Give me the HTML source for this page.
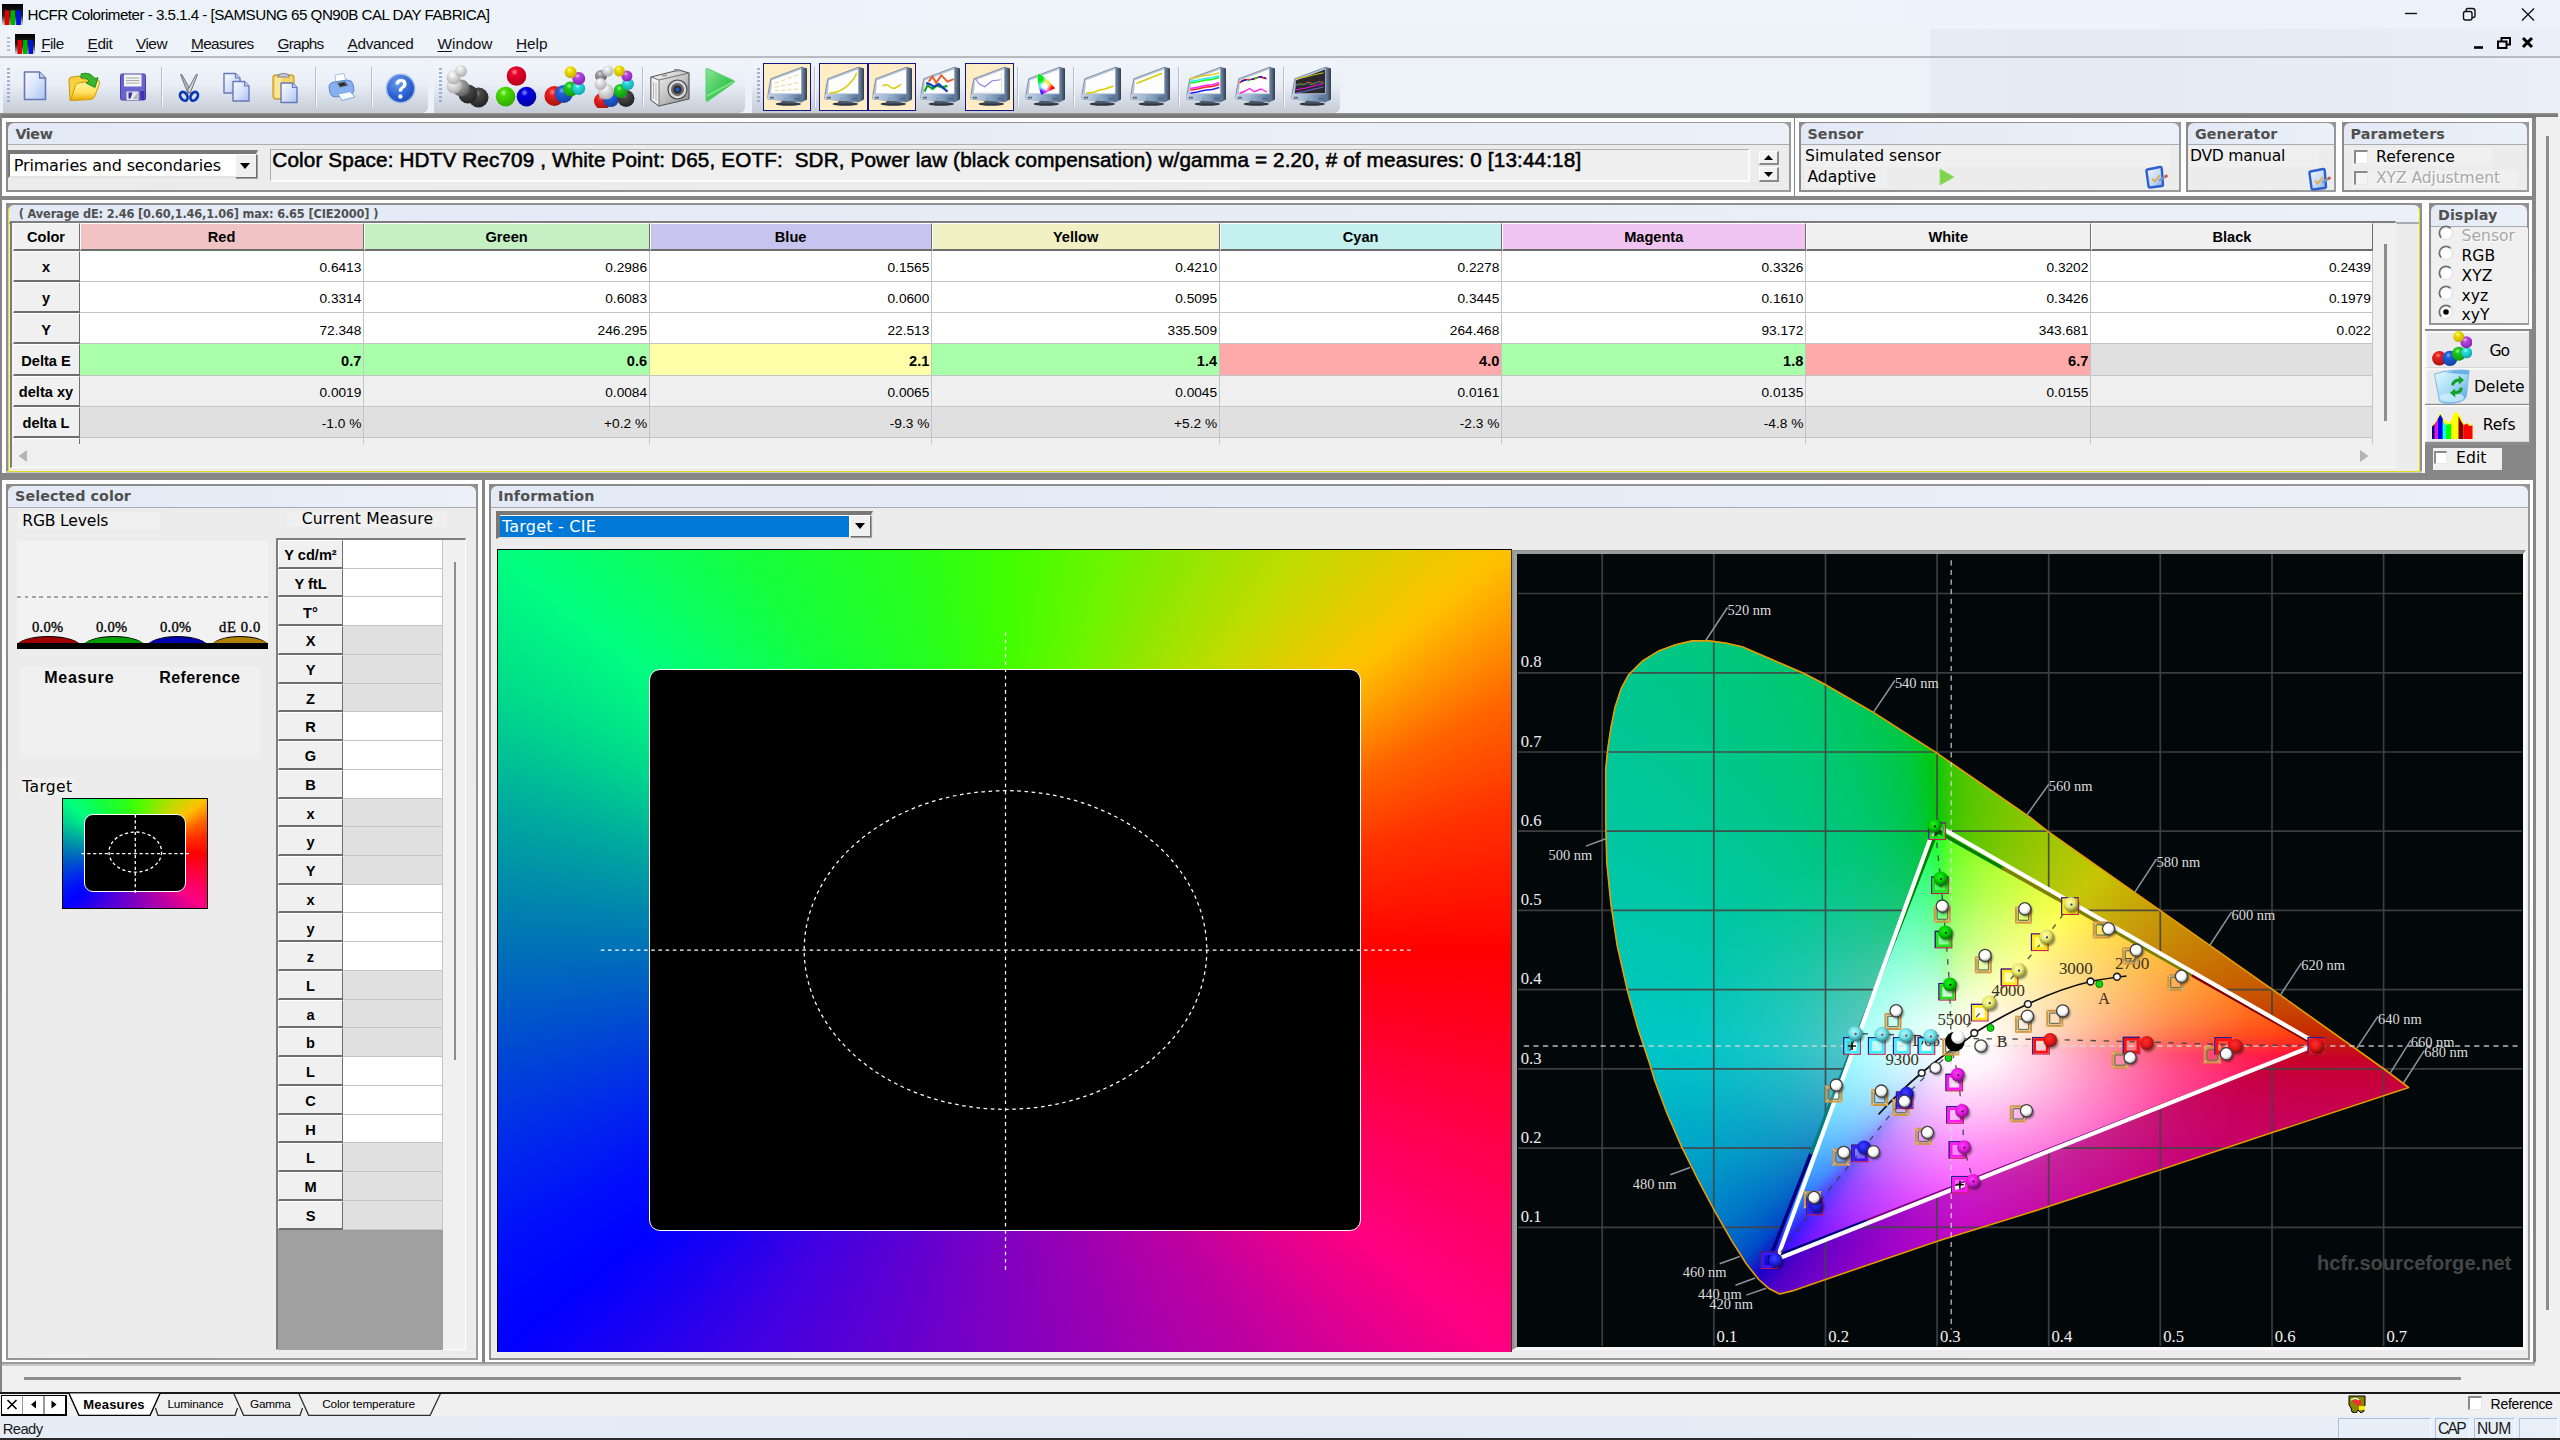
<!DOCTYPE html>
<html lang="en"><head><meta charset="utf-8"><title>HCFR Colorimeter - 3.5.1.4 - [SAMSUNG 65 QN90B CAL DAY FABRICA]</title>
<style>html,body{margin:0;padding:0;width:2560px;height:1440px;overflow:hidden;background:#f0f0f0}div{position:absolute;box-sizing:border-box}.t{white-space:pre}u{text-decoration-thickness:1.3px;text-underline-offset:2px}</style></head><body>
<div id="app" style="left:0;top:0;width:2560px;height:1440px;overflow:hidden">
<div style="left:0px;top:0px;width:2560px;height:29px;background:linear-gradient(90deg,#ebf2f9,#eef4fa 40%,#eef4fa 70%,#ecf2f9);"></div>
<svg style="position:absolute;left:2px;top:4px" width="21" height="21" viewBox="0 0 20 20"><defs><linearGradient id="ig" x1="0" y1="0" x2="0" y2="1"><stop offset="0" stop-color="#000"/><stop offset=".55" stop-color="#222"/><stop offset="1" stop-color="#ddd"/></linearGradient></defs><rect x="0" y="0" width="20" height="20" fill="url(#ig)"/><rect x="2.5" y="6" width="4.5" height="14" fill="#e00000"/><rect x="8" y="6" width="4.5" height="14" fill="#00b000"/><rect x="13.5" y="6" width="4.5" height="14" fill="#0010e0"/></svg>
<div class="t" style="left:27.50px;top:5.03px;font-family:'Liberation Sans',sans-serif;font-size:15.2px;line-height:20px;font-weight:400;color:#000;letter-spacing:-0.526px;">HCFR Colorimeter - 3.5.1.4 - [SAMSUNG 65 QN90B CAL DAY FABRICA]</div>
<svg style="position:absolute;left:2380px;top:0" width="180" height="29" viewBox="2380 0 180 29" fill="none" stroke="#111" stroke-width="1.4"><path d="M2405 13.5h12"/><rect x="2463.500" y="11.500" width="8.500" height="8.500" rx="2"/><path d="M2466 11.500v-1q0-2 2-2h4.500q2.500 0 2.500 2.500v4.500q0 2-2 2h-1"/><path d="M2522 8.5l12 12M2534 8.5l-12 12"/></svg>
<div style="left:0px;top:29px;width:2560px;height:29px;background:#eef3fa;"></div>
<div style="left:1930px;top:29px;width:630px;height:84px;background:linear-gradient(90deg,#e6ecf6,#e5ebf5 30%,#e9eef7);"></div>
<div style="left:7px;top:37px;width:3px;height:14px;background:repeating-linear-gradient(180deg,#9aa7bb 0 2px,transparent 2px 4px);opacity:.7"></div>
<svg style="position:absolute;left:15px;top:34px" width="20" height="20" viewBox="0 0 20 20"><defs><linearGradient id="ig" x1="0" y1="0" x2="0" y2="1"><stop offset="0" stop-color="#000"/><stop offset=".55" stop-color="#222"/><stop offset="1" stop-color="#ddd"/></linearGradient></defs><rect x="0" y="0" width="20" height="20" fill="url(#ig)"/><rect x="2.5" y="6" width="4.5" height="14" fill="#e00000"/><rect x="8" y="6" width="4.5" height="14" fill="#00b000"/><rect x="13.5" y="6" width="4.5" height="14" fill="#0010e0"/></svg>
<div class="t" style="left:41.20px;top:34.46px;font-family:'Liberation Sans',sans-serif;font-size:15.4px;line-height:20px;font-weight:400;color:#111;letter-spacing:-0.578px;"><u>F</u>ile</div>
<div class="t" style="left:87.50px;top:34.46px;font-family:'Liberation Sans',sans-serif;font-size:15.4px;line-height:20px;font-weight:400;color:#111;letter-spacing:-0.383px;"><u>E</u>dit</div>
<div class="t" style="left:136.00px;top:34.46px;font-family:'Liberation Sans',sans-serif;font-size:15.4px;line-height:20px;font-weight:400;color:#111;letter-spacing:-0.523px;"><u>V</u>iew</div>
<div class="t" style="left:191.00px;top:34.46px;font-family:'Liberation Sans',sans-serif;font-size:15.4px;line-height:20px;font-weight:400;color:#111;letter-spacing:-0.635px;"><u>M</u>easures</div>
<div class="t" style="left:277.50px;top:34.46px;font-family:'Liberation Sans',sans-serif;font-size:15.4px;line-height:20px;font-weight:400;color:#111;letter-spacing:-0.747px;"><u>G</u>raphs</div>
<div class="t" style="left:347.50px;top:34.46px;font-family:'Liberation Sans',sans-serif;font-size:15.4px;line-height:20px;font-weight:400;color:#111;letter-spacing:-0.309px;"><u>A</u>dvanced</div>
<div class="t" style="left:437.50px;top:34.46px;font-family:'Liberation Sans',sans-serif;font-size:15.4px;line-height:20px;font-weight:400;color:#111;letter-spacing:0.042px;"><u>W</u>indow</div>
<div class="t" style="left:516.00px;top:34.46px;font-family:'Liberation Sans',sans-serif;font-size:15.4px;line-height:20px;font-weight:400;color:#111;letter-spacing:-0.039px;"><u>H</u>elp</div>
<svg style="position:absolute;left:2470px;top:29px" width="80" height="28" viewBox="2470 29 80 28" fill="none" stroke="#000" stroke-width="2.6"><path d="M2474 47.5h9"/><path d="M2498 41.5h8.5v6.5h-8.5zM2501.500 41v-3h8.5v6.500h-3" stroke-width="2"/><path d="M2523 38l9 9M2532 38l-9 9" stroke-width="3"/></svg>
<div style="left:0px;top:58px;width:1930px;height:55px;background:#edf2f9;"></div>
<div style="left:3px;top:60px;width:425px;height:53px;background:linear-gradient(180deg,#f1f5fb 0%,#eaeff7 45%,#d9dfe9 70%,#c6ccd6 100%);border-radius:0 6px 6px 0;"></div>
<div style="left:434px;top:60px;width:311px;height:53px;background:linear-gradient(180deg,#f1f5fb 0%,#eaeff7 45%,#d9dfe9 70%,#c6ccd6 100%);border-radius:0 6px 6px 0;"></div>
<div style="left:752px;top:60px;width:588px;height:53px;background:linear-gradient(180deg,#f1f5fb 0%,#eaeff7 45%,#d9dfe9 70%,#c6ccd6 100%);border-radius:0 6px 6px 0;"></div>
<div style="left:7px;top:68px;width:3px;height:36px;background:repeating-linear-gradient(180deg,#8fa2c2 0 2px,transparent 2px 4px);opacity:.8"></div>
<div style="left:439px;top:68px;width:3px;height:36px;background:repeating-linear-gradient(180deg,#8fa2c2 0 2px,transparent 2px 4px);opacity:.8"></div>
<div style="left:757px;top:68px;width:3px;height:36px;background:repeating-linear-gradient(180deg,#8fa2c2 0 2px,transparent 2px 4px);opacity:.8"></div>
<div style="left:0px;top:55.9px;width:2560px;height:2px;background:#b8babf;"></div>
<div style="left:161px;top:67px;width:2px;height:40px;background:linear-gradient(90deg,#b8bfcb 0 1px,#f6f8fc 1px 2px);"></div>
<div style="left:315px;top:67px;width:2px;height:40px;background:linear-gradient(90deg,#b8bfcb 0 1px,#f6f8fc 1px 2px);"></div>
<div style="left:371px;top:67px;width:2px;height:40px;background:linear-gradient(90deg,#b8bfcb 0 1px,#f6f8fc 1px 2px);"></div>
<div style="left:642px;top:67px;width:2px;height:40px;background:linear-gradient(90deg,#b8bfcb 0 1px,#f6f8fc 1px 2px);"></div>
<div style="left:814px;top:67px;width:2px;height:40px;background:linear-gradient(90deg,#b8bfcb 0 1px,#f6f8fc 1px 2px);"></div>
<div style="left:1016.5px;top:67px;width:2px;height:40px;background:linear-gradient(90deg,#b8bfcb 0 1px,#f6f8fc 1px 2px);"></div>
<div style="left:1072.5px;top:67px;width:2px;height:40px;background:linear-gradient(90deg,#b8bfcb 0 1px,#f6f8fc 1px 2px);"></div>
<div style="left:1177.5px;top:67px;width:2px;height:40px;background:linear-gradient(90deg,#b8bfcb 0 1px,#f6f8fc 1px 2px);"></div>
<div style="left:1282.5px;top:67px;width:2px;height:40px;background:linear-gradient(90deg,#b8bfcb 0 1px,#f6f8fc 1px 2px);"></div>
<svg width="0" height="0" style="position:absolute"><defs><linearGradient id="gdoc" x1="0" y1="0" x2="1" y2="1"><stop offset="0" stop-color="#fafbff"/><stop offset=".5" stop-color="#d9e3fb"/><stop offset="1" stop-color="#a9c2f4"/></linearGradient><linearGradient id="gfold" x1="0" y1="0" x2="0" y2="1"><stop offset="0" stop-color="#fff8a0"/><stop offset=".6" stop-color="#ffe060"/><stop offset="1" stop-color="#e8a800"/></linearGradient><linearGradient id="gbase" x1="0" y1="0" x2="1" y2="0"><stop offset="0" stop-color="#c8d4e4"/><stop offset=".45" stop-color="#9cb4d0"/><stop offset="1" stop-color="#54749c"/></linearGradient><linearGradient id="gside" x1="0" y1="0" x2="1" y2="0"><stop offset="0" stop-color="#7088a8"/><stop offset="1" stop-color="#2c3848"/></linearGradient><linearGradient id="gcam" x1="0" y1="0" x2="1" y2="1"><stop offset="0" stop-color="#fdfdfd"/><stop offset=".5" stop-color="#c8c8c8"/><stop offset="1" stop-color="#8a8a8a"/></linearGradient><linearGradient id="gplay" x1="0" y1="0" x2="1" y2="1"><stop offset="0" stop-color="#8ce49a"/><stop offset=".5" stop-color="#48cc5c"/><stop offset="1" stop-color="#20b838"/></linearGradient><radialGradient id="ghelp" cx=".4" cy=".3" r=".8"><stop offset="0" stop-color="#6c9cf0"/><stop offset=".6" stop-color="#2c62d0"/><stop offset="1" stop-color="#1848b0"/></radialGradient><radialGradient id="sr" cx=".4" cy=".3" r=".75"><stop offset="0" stop-color="#ff9090"/><stop offset=".25" stop-color="#e8002c"/><stop offset="1" stop-color="#b00018"/></radialGradient><radialGradient id="sg" cx=".4" cy=".3" r=".75"><stop offset="0" stop-color="#b0ff90"/><stop offset=".25" stop-color="#48d800"/><stop offset="1" stop-color="#30a800"/></radialGradient><radialGradient id="sb" cx=".4" cy=".3" r=".75"><stop offset="0" stop-color="#9090ff"/><stop offset=".25" stop-color="#0000e0"/><stop offset="1" stop-color="#0000a0"/></radialGradient><radialGradient id="sy" cx=".4" cy=".3" r=".75"><stop offset="0" stop-color="#ffffc0"/><stop offset=".25" stop-color="#f0e000"/><stop offset="1" stop-color="#c0a800"/></radialGradient><radialGradient id="sp" cx=".4" cy=".3" r=".75"><stop offset="0" stop-color="#f0c0ff"/><stop offset=".25" stop-color="#b848e0"/><stop offset="1" stop-color="#8020b0"/></radialGradient><radialGradient id="sc" cx=".4" cy=".3" r=".75"><stop offset="0" stop-color="#c0ffff"/><stop offset=".25" stop-color="#28e0e0"/><stop offset="1" stop-color="#10a0a8"/></radialGradient><radialGradient id="sw" cx=".4" cy=".3" r=".75"><stop offset="0" stop-color="#ffffff"/><stop offset=".25" stop-color="#e8e8e8"/><stop offset="1" stop-color="#a8a8a8"/></radialGradient><radialGradient id="sk" cx=".4" cy=".3" r=".75"><stop offset="0" stop-color="#a0a0a0"/><stop offset=".25" stop-color="#484848"/><stop offset="1" stop-color="#202020"/></radialGradient><radialGradient id="sm" cx=".4" cy=".3" r=".75"><stop offset="0" stop-color="#e0e0e0"/><stop offset=".25" stop-color="#a0a0a0"/><stop offset="1" stop-color="#585858"/></radialGradient><radialGradient id="sR" cx=".4" cy=".3" r=".75"><stop offset="0" stop-color="#ff8080"/><stop offset=".25" stop-color="#e82020"/><stop offset="1" stop-color="#a01010"/></radialGradient><radialGradient id="sB" cx=".4" cy=".3" r=".75"><stop offset="0" stop-color="#80b0ff"/><stop offset=".25" stop-color="#2060d8"/><stop offset="1" stop-color="#1040a0"/></radialGradient><radialGradient id="sG" cx=".4" cy=".3" r=".75"><stop offset="0" stop-color="#90ff90"/><stop offset=".25" stop-color="#20c820"/><stop offset="1" stop-color="#109010"/></radialGradient></defs></svg>
<svg style="position:absolute;left:20px;top:68px;" width="32" height="36" viewBox="0 0 32 36"><path d="M4.5 4h15l6 6v21.5h-21z" fill="url(#gdoc)" stroke="#6878b4" stroke-width="1.6" stroke-linejoin="round"/><path d="M19.5 4v6h6" fill="#c4d0f4" stroke="#6878b4" stroke-width="1.2800000000000002" stroke-linejoin="round"/></svg>
<svg style="position:absolute;left:66px;top:70px;" width="36" height="34" viewBox="0 0 36 34"><path d="M4 30L3 10q0-3 3-3l8-1 3 3 12-1q3 0 3 3v4z" fill="#f8d040" stroke="#c89400" stroke-width="1"/><path d="M4.500 30.500l5-15q1-2.500 4-2.800l18-2q3 0 2 3l-5 13q-1 2.500-4 2.800z" fill="url(#gfold)" stroke="#d09c00" stroke-width="1"/><path d="M15 4q9-3 14 5l3-1.500-3 10-9-4.500 3.500-1.500q-3-4.500-8.500-3.500z" fill="#38b830" stroke="#1c8c18" stroke-width="1"/></svg>
<svg style="position:absolute;left:118px;top:72px;" width="30" height="30" viewBox="0 0 30 30"><path d="M2.500 3.500q0-1.500 1.500-1.500h22q1.500 0 1.500 1.500v23q0 1.500-1.500 1.500h-22q-1.500 0-1.500-1.500z" fill="#6a64d0" stroke="#4840a8" stroke-width="1"/><rect x="6" y="2.500" width="17.500" height="12" fill="#f4f4f4"/><path d="M8 6h13.500M8 8.500h13.500M8 11h13.500" stroke="#a8a8a8" stroke-width="1"/><rect x="8.500" y="19.500" width="12" height="8.500" fill="#e8e8e8"/><path d="M10.500 20.500h4l-2 6h-2z" fill="#3830a0"/><path d="M15 27l4.500-6.500v6.500z" fill="#b0b0b0"/><rect x="22.500" y="19" width="4" height="9" fill="#3c34a4"/></svg>
<svg style="position:absolute;left:176px;top:72px;" width="26" height="32" viewBox="0 0 26 32"><path d="M4.500 2.500q.8-.8 1.500.3l8.500 15.500-2.500 3.200z" fill="#b8bcc4" stroke="#606670" stroke-width=".9"/><path d="M21.500 2.500q-.8-.8-1.500.3l-8.500 15.500 2.500 3.200z" fill="#d4d8de" stroke="#606670" stroke-width=".9"/><ellipse cx="7.800" cy="24.300" rx="3.300" ry="4.700" transform="rotate(-32 7.800 24.300)" fill="none" stroke="#0838b0" stroke-width="2.700"/><ellipse cx="18.200" cy="24.300" rx="3.300" ry="4.700" transform="rotate(32 18.200 24.300)" fill="none" stroke="#0838b0" stroke-width="2.700"/></svg>
<svg style="position:absolute;left:221px;top:70px;" width="32" height="34" viewBox="0 0 32 34"><path d="M3 3.5h11.5l4.5 4.5v15.0h-16z" fill="url(#gdoc)" stroke="#6878b4" stroke-width="1.4" stroke-linejoin="round"/><path d="M14.5 3.5v4.5h4.5" fill="#c4d0f4" stroke="#6878b4" stroke-width="1.1199999999999999" stroke-linejoin="round"/><path d="M12 11.5h11.5l4.5 4.5v15.0h-16z" fill="url(#gdoc)" stroke="#6878b4" stroke-width="1.4" stroke-linejoin="round"/><path d="M23.5 11.5v4.5h4.5" fill="#c4d0f4" stroke="#6878b4" stroke-width="1.1199999999999999" stroke-linejoin="round"/></svg>
<svg style="position:absolute;left:270px;top:70px;" width="32" height="36" viewBox="0 0 32 36"><rect x="3" y="5" width="21" height="24" rx="3" fill="#f4d468" stroke="#c8a030" stroke-width="1.3"/><rect x="5" y="7.500" width="7" height="20" fill="#fbeaa0" opacity=".8"/><path d="M8 7q0-3.500 5.500-3.500t5.500 3.500z" fill="#c8c8d0" stroke="#8088a0" stroke-width="1.200"/><path d="M11 13h11.5l4.5 4.5v15.0h-16z" fill="url(#gdoc)" stroke="#6878b4" stroke-width="1.4" stroke-linejoin="round"/><path d="M22.5 13v4.5h4.5" fill="#c4d0f4" stroke="#6878b4" stroke-width="1.1199999999999999" stroke-linejoin="round"/></svg>
<svg style="position:absolute;left:326px;top:72px;" width="32" height="32" viewBox="0 0 32 32"><path d="M9 3l9-1.500 2 8-10 2z" fill="#fff" stroke="#a8c0e8" stroke-width="1"/><path d="M3 15q0-4 5-5l13-2q5 0 6 4l1 6q0 3-3 4l-15 3q-5 0-6-4z" fill="#88b0f0" stroke="#5c88d0" stroke-width="1"/><path d="M11 11l8-1.500 3 4-8 2z" fill="#505860"/><path d="M13 12l5-1 1.500 2-5 1z" fill="#202428"/><path d="M12 22l12-2.500 5 5.500-13 3.500z" fill="#f4faff" stroke="#78a8e0" stroke-width="1"/></svg>
<svg style="position:absolute;left:384px;top:72px;" width="34" height="34" viewBox="0 0 34 34"><circle cx="16.600" cy="16.500" r="14.200" fill="url(#ghelp)" stroke="#a4bce8" stroke-width="1.500"/><path d="M11.500 12.500q0-5.500 5.500-5.500t5.500 5q0 3-3 4.500-1.500 1-1.500 3h-3.200q0-3.500 2.500-5 1.700-1 1.700-2.500 0-2-2-2t-2.200 2.500z" fill="#fff"/><circle cx="16.400" cy="24.500" r="2.200" fill="#fff"/></svg>
<svg style="position:absolute;left:444px;top:64px;" width="46" height="44" viewBox="444 64 46 44"><circle cx="478.5" cy="97.5" r="10" fill="url(#sk)"/><circle cx="468" cy="94" r="9.5" fill="url(#sk)"/><circle cx="461" cy="88" r="8.5" fill="url(#sm)"/><circle cx="454" cy="86" r="7.5" fill="url(#sw)"/><circle cx="453.5" cy="77.5" r="7" fill="url(#sw)"/><circle cx="461" cy="71" r="6" fill="url(#sw)"/></svg>
<svg style="position:absolute;left:494px;top:64px;" width="44" height="44" viewBox="494 64 44 44"><circle cx="516.5" cy="76" r="9.8" fill="url(#sr)"/><circle cx="505.6" cy="96.6" r="9.8" fill="url(#sg)"/><circle cx="526.5" cy="96.6" r="9.8" fill="url(#sb)"/></svg>
<svg style="position:absolute;left:542px;top:64px;" width="46" height="44" viewBox="542 64 46 44"><circle cx="554.4" cy="96" r="10" fill="url(#sR)"/><circle cx="563.75" cy="94" r="9" fill="url(#sB)"/><circle cx="570.6" cy="89" r="7.5" fill="url(#sG)"/><circle cx="578.75" cy="88.5" r="6.5" fill="url(#sc)"/><circle cx="578.75" cy="78.5" r="6.5" fill="url(#sp)"/><circle cx="570.6" cy="72.25" r="6" fill="url(#sy)"/></svg>
<svg style="position:absolute;left:592px;top:64px;" width="46" height="44" viewBox="592 64 46 44"><circle cx="602.5" cy="101" r="8.5" fill="url(#sR)"/><circle cx="611" cy="99" r="8" fill="url(#sB)"/><circle cx="626" cy="98.5" r="8.5" fill="url(#sk)"/><circle cx="620.6" cy="91" r="7" fill="url(#sG)"/><circle cx="606" cy="91.6" r="8" fill="url(#sw)"/><circle cx="628" cy="84" r="6" fill="url(#sc)"/><circle cx="601" cy="76" r="6" fill="url(#sm)"/><circle cx="600.5" cy="84" r="6" fill="url(#sw)"/><circle cx="626.9" cy="76" r="5.5" fill="url(#sp)"/><circle cx="608" cy="71" r="5.5" fill="url(#sw)"/><circle cx="619.4" cy="71" r="5.5" fill="url(#sy)"/></svg>
<svg style="position:absolute;left:648px;top:66px;" width="46" height="42" viewBox="0 0 46 42"><path d="M3 11l28-7 10 3v26l-30 7-8-6z" fill="url(#gcam)" stroke="#585858" stroke-width="1.200" stroke-linejoin="round"/><path d="M3 11l8 3v26l-8-6z" fill="#f4f4f4" stroke="#707070" stroke-width="1"/><path d="M5.500 16v17M8 17v18" stroke="#b0b0b0" stroke-width="1"/><path d="M11 14l30-7" stroke="#707070" stroke-width="1" fill="none"/><rect x="26" y="3" width="5" height="2.500" fill="#909090"/><rect x="14" y="8.500" width="5" height="2" fill="#a0a0a0"/><circle cx="29.500" cy="23.500" r="9.500" fill="#d8d8d8" stroke="#484848" stroke-width="1.200"/><circle cx="29.500" cy="23.500" r="6.500" fill="#686868"/><circle cx="29.500" cy="23.500" r="4" fill="#303038"/><circle cx="29.500" cy="23.500" r="2" fill="#1858d0"/></svg>
<svg style="position:absolute;left:702px;top:66px;" width="36" height="38" viewBox="0 0 36 38"><path d="M4 3.500q0-1.500 1.500-1l26 12q2 1 0 2.500l-25.500 18q-2 1-2-1z" fill="url(#gplay)" stroke="#5cd070" stroke-width="1"/><path d="M5 30l26-14" stroke="#a0f0a8" stroke-width="1.500" opacity=".7"/></svg>
<div style="left:762.5px;top:62.8px;width:48.8px;height:48.4px;background:#ffedc6;border:1.4px solid #15158a;"></div>
<svg style="position:absolute;left:767px;top:56px;" width="40" height="50" viewBox="0 56 320 400"><g transform="translate(0 56)"><ellipse cx="170" cy="384" rx="102" ry="14" fill="#2e3640"/><path d="M120 355h100l14 24H106z" fill="#4a5868"/><path d="M280 88l36 10q6 2 6 10v232q0 8-8 11l-34 16z" fill="url(#gside)"/><path d="M30 182L280 88v280L12 345q-8-1-7-10l8-62z" fill="#b8c6d8" stroke="#6a7a90" stroke-width="6" stroke-linejoin="round"/><path d="M8 305l272 0v63L12 345q-8-1-7-10z" fill="url(#gbase)"/><path d="M38 196L272 108v190H30l8-60z" fill="#fdfdfd"/><rect x="22" y="326" width="34" height="14" fill="#5a6a7e"/><rect x="222" y="334" width="44" height="15" fill="#5a6a7e"/><circle cx="140" cy="340" r="7" fill="#7e92ac"/><g stroke="#f0d890" stroke-width="9" fill="none"><path d="M60 218l34-12M112 200l34-12M164 180l34-12M216 162l34-12M60 250l34-6M112 240l34-6M164 230l34-6M216 220l34-6M60 278h34M112 274h34M164 270h34M216 266h34"/></g></g></svg>
<div style="left:819px;top:62.8px;width:48.8px;height:48.4px;background:#ffedc6;border:1.4px solid #15158a;"></div>
<svg style="position:absolute;left:823.5px;top:56px;" width="40" height="50" viewBox="0 56 320 400"><g transform="translate(0 56)"><ellipse cx="170" cy="384" rx="102" ry="14" fill="#2e3640"/><path d="M120 355h100l14 24H106z" fill="#4a5868"/><path d="M280 88l36 10q6 2 6 10v232q0 8-8 11l-34 16z" fill="url(#gside)"/><path d="M30 182L280 88v280L12 345q-8-1-7-10l8-62z" fill="#b8c6d8" stroke="#6a7a90" stroke-width="6" stroke-linejoin="round"/><path d="M8 305l272 0v63L12 345q-8-1-7-10z" fill="url(#gbase)"/><path d="M38 196L272 108v190H30l8-60z" fill="#fdfdfd"/><rect x="22" y="326" width="34" height="14" fill="#5a6a7e"/><rect x="222" y="334" width="44" height="15" fill="#5a6a7e"/><circle cx="140" cy="340" r="7" fill="#7e92ac"/><path d="M50 296q90-6 150-70t58-88" stroke="#d8cc00" stroke-width="12" fill="none" stroke-linecap="round"/></g></svg>
<div style="left:867.5px;top:62.8px;width:48.8px;height:48.4px;background:#ffedc6;border:1.4px solid #15158a;"></div>
<svg style="position:absolute;left:872px;top:56px;" width="40" height="50" viewBox="0 56 320 400"><g transform="translate(0 56)"><ellipse cx="170" cy="384" rx="102" ry="14" fill="#2e3640"/><path d="M120 355h100l14 24H106z" fill="#4a5868"/><path d="M280 88l36 10q6 2 6 10v232q0 8-8 11l-34 16z" fill="url(#gside)"/><path d="M30 182L280 88v280L12 345q-8-1-7-10l8-62z" fill="#b8c6d8" stroke="#6a7a90" stroke-width="6" stroke-linejoin="round"/><path d="M8 305l272 0v63L12 345q-8-1-7-10z" fill="url(#gbase)"/><path d="M38 196L272 108v190H30l8-60z" fill="#fdfdfd"/><rect x="22" y="326" width="34" height="14" fill="#5a6a7e"/><rect x="222" y="334" width="44" height="15" fill="#5a6a7e"/><circle cx="140" cy="340" r="7" fill="#7e92ac"/><path d="M90 238q28-18 52 6t52 8 34-22" stroke="#d8cc00" stroke-width="12" fill="none" stroke-linecap="round"/></g></svg>
<svg style="position:absolute;left:920px;top:56px;" width="40" height="50" viewBox="0 56 320 400"><g transform="translate(0 56)"><ellipse cx="170" cy="384" rx="102" ry="14" fill="#2e3640"/><path d="M120 355h100l14 24H106z" fill="#4a5868"/><path d="M280 88l36 10q6 2 6 10v232q0 8-8 11l-34 16z" fill="url(#gside)"/><path d="M30 182L280 88v280L12 345q-8-1-7-10l8-62z" fill="#b8c6d8" stroke="#6a7a90" stroke-width="6" stroke-linejoin="round"/><path d="M8 305l272 0v63L12 345q-8-1-7-10z" fill="url(#gbase)"/><path d="M38 196L272 108v190H30l8-60z" fill="#fdfdfd"/><rect x="22" y="326" width="34" height="14" fill="#5a6a7e"/><rect x="222" y="334" width="44" height="15" fill="#5a6a7e"/><circle cx="140" cy="340" r="7" fill="#7e92ac"/><path d="M36 285l24-50 40 28 36-26 40 14 44-12" stroke="#18a028" stroke-width="18" fill="none"/><path d="M50 215l30 10 30 20 40-20 70 60" stroke="#1040b8" stroke-width="17" fill="none"/><path d="M70 205l30-40 30 50 40-60 50 50 50-20" stroke="#e86030" stroke-width="16" fill="none"/></g></svg>
<div style="left:965px;top:62.8px;width:48.8px;height:48.4px;background:#ffedc6;border:1.4px solid #15158a;"></div>
<svg style="position:absolute;left:969.5px;top:56px;" width="40" height="50" viewBox="0 56 320 400"><g transform="translate(0 56)"><ellipse cx="170" cy="384" rx="102" ry="14" fill="#2e3640"/><path d="M120 355h100l14 24H106z" fill="#4a5868"/><path d="M280 88l36 10q6 2 6 10v232q0 8-8 11l-34 16z" fill="url(#gside)"/><path d="M30 182L280 88v280L12 345q-8-1-7-10l8-62z" fill="#b8c6d8" stroke="#6a7a90" stroke-width="6" stroke-linejoin="round"/><path d="M8 305l272 0v63L12 345q-8-1-7-10z" fill="url(#gbase)"/><path d="M38 196L272 108v190H30l8-60z" fill="#fdfdfd"/><rect x="22" y="326" width="34" height="14" fill="#5a6a7e"/><rect x="222" y="334" width="44" height="15" fill="#5a6a7e"/><circle cx="140" cy="340" r="7" fill="#7e92ac"/><path d="M40 290h220M255 130v165" stroke="#d8d8d8" stroke-width="4" fill="none"/><path d="M44 182l30 42 44 22 60-48 68-8" stroke="#9080e8" stroke-width="9" fill="none"/><path d="M250 140v150" stroke="#98d890" stroke-width="4" stroke-dasharray="8 8"/></g></svg>
<svg style="position:absolute;left:1025px;top:56px;" width="40" height="50" viewBox="0 56 320 400"><g transform="translate(0 56)"><ellipse cx="170" cy="384" rx="102" ry="14" fill="#2e3640"/><path d="M120 355h100l14 24H106z" fill="#4a5868"/><path d="M280 88l36 10q6 2 6 10v232q0 8-8 11l-34 16z" fill="url(#gside)"/><path d="M30 182L280 88v280L12 345q-8-1-7-10l8-62z" fill="#b8c6d8" stroke="#6a7a90" stroke-width="6" stroke-linejoin="round"/><path d="M8 305l272 0v63L12 345q-8-1-7-10z" fill="url(#gbase)"/><path d="M38 196L272 108v190H30l8-60z" fill="#fdfdfd"/><rect x="22" y="326" width="34" height="14" fill="#5a6a7e"/><rect x="222" y="334" width="44" height="15" fill="#5a6a7e"/><circle cx="140" cy="340" r="7" fill="#7e92ac"/><defs><clipPath id="hs"><path d="M100 148q8-8 24-2 70 50 118 112l-112 54q-36-96-30-164z"/></clipPath><filter id="hb"><feGaussianBlur stdDeviation="14"/></filter></defs><g clip-path="url(#hs)"><rect x="80" y="130" width="180" height="200" fill="#fff"/><g filter="url(#hb)"><circle cx="118" cy="176" r="46" fill="#00e818"/><circle cx="232" cy="262" r="44" fill="#ff1010"/><circle cx="124" cy="300" r="40" fill="#1020ff"/><circle cx="190" cy="204" r="24" fill="#e8e800"/><circle cx="172" cy="296" r="22" fill="#f010e0"/><circle cx="104" cy="240" r="20" fill="#00d8d8"/></g><circle cx="158" cy="244" r="20" fill="#fff" opacity=".8" filter="url(#hb)"/></g></g></svg>
<svg style="position:absolute;left:1081px;top:56px;" width="40" height="50" viewBox="0 56 320 400"><g transform="translate(0 56)"><ellipse cx="170" cy="384" rx="102" ry="14" fill="#2e3640"/><path d="M120 355h100l14 24H106z" fill="#4a5868"/><path d="M280 88l36 10q6 2 6 10v232q0 8-8 11l-34 16z" fill="url(#gside)"/><path d="M30 182L280 88v280L12 345q-8-1-7-10l8-62z" fill="#b8c6d8" stroke="#6a7a90" stroke-width="6" stroke-linejoin="round"/><path d="M8 305l272 0v63L12 345q-8-1-7-10z" fill="url(#gbase)"/><path d="M38 196L272 108v190H30l8-60z" fill="#fdfdfd"/><rect x="22" y="326" width="34" height="14" fill="#5a6a7e"/><rect x="222" y="334" width="44" height="15" fill="#5a6a7e"/><circle cx="140" cy="340" r="7" fill="#7e92ac"/><path d="M46 296l56-6 40-16 48-10 66-22" stroke="#d8cc00" stroke-width="12" fill="none" stroke-linecap="round"/></g></svg>
<svg style="position:absolute;left:1130px;top:56px;" width="40" height="50" viewBox="0 56 320 400"><g transform="translate(0 56)"><ellipse cx="170" cy="384" rx="102" ry="14" fill="#2e3640"/><path d="M120 355h100l14 24H106z" fill="#4a5868"/><path d="M280 88l36 10q6 2 6 10v232q0 8-8 11l-34 16z" fill="url(#gside)"/><path d="M30 182L280 88v280L12 345q-8-1-7-10l8-62z" fill="#b8c6d8" stroke="#6a7a90" stroke-width="6" stroke-linejoin="round"/><path d="M8 305l272 0v63L12 345q-8-1-7-10z" fill="url(#gbase)"/><path d="M38 196L272 108v190H30l8-60z" fill="#fdfdfd"/><rect x="22" y="326" width="34" height="14" fill="#5a6a7e"/><rect x="222" y="334" width="44" height="15" fill="#5a6a7e"/><circle cx="140" cy="340" r="7" fill="#7e92ac"/><path d="M56 218l196-78" stroke="#d8cc00" stroke-width="12" fill="none" stroke-linecap="round"/></g></svg>
<svg style="position:absolute;left:1186px;top:56px;" width="40" height="50" viewBox="0 56 320 400"><g transform="translate(0 56)"><ellipse cx="170" cy="384" rx="102" ry="14" fill="#2e3640"/><path d="M120 355h100l14 24H106z" fill="#4a5868"/><path d="M280 88l36 10q6 2 6 10v232q0 8-8 11l-34 16z" fill="url(#gside)"/><path d="M30 182L280 88v280L12 345q-8-1-7-10l8-62z" fill="#b8c6d8" stroke="#6a7a90" stroke-width="6" stroke-linejoin="round"/><path d="M8 305l272 0v63L12 345q-8-1-7-10z" fill="url(#gbase)"/><path d="M38 196L272 108v190H30l8-60z" fill="#fdfdfd"/><rect x="22" y="326" width="34" height="14" fill="#5a6a7e"/><rect x="222" y="334" width="44" height="15" fill="#5a6a7e"/><circle cx="140" cy="340" r="7" fill="#7e92ac"/><path d="M34 180l56-10 60-14 60-6 56-16" stroke="#e0d020" stroke-width="11" fill="none"/><path d="M34 204l56-10 60-14 60-6 56-16" stroke="#20f0f0" stroke-width="11" fill="none"/><path d="M34 218l56-10 60-14 60-6 56-16" stroke="#20f020" stroke-width="11" fill="none"/><path d="M34 260l56-10 60-14 60-6 56-16" stroke="#ff20ff" stroke-width="11" fill="none"/><path d="M34 274l56-10 60-14 60-6 56-16" stroke="#ff2020" stroke-width="11" fill="none"/><path d="M34 298l56-10 60-14 60-6 56-16" stroke="#2020ff" stroke-width="11" fill="none"/></g></svg>
<svg style="position:absolute;left:1235px;top:56px;" width="40" height="50" viewBox="0 56 320 400"><g transform="translate(0 56)"><ellipse cx="170" cy="384" rx="102" ry="14" fill="#2e3640"/><path d="M120 355h100l14 24H106z" fill="#4a5868"/><path d="M280 88l36 10q6 2 6 10v232q0 8-8 11l-34 16z" fill="url(#gside)"/><path d="M30 182L280 88v280L12 345q-8-1-7-10l8-62z" fill="#b8c6d8" stroke="#6a7a90" stroke-width="6" stroke-linejoin="round"/><path d="M8 305l272 0v63L12 345q-8-1-7-10z" fill="url(#gbase)"/><path d="M38 196L272 108v190H30l8-60z" fill="#fdfdfd"/><rect x="22" y="326" width="34" height="14" fill="#5a6a7e"/><rect x="222" y="334" width="44" height="15" fill="#5a6a7e"/><circle cx="140" cy="340" r="7" fill="#7e92ac"/><path d="M36 214l40-24 70-4 50-20 56 16" stroke="#ff1010" stroke-width="13" fill="none"/><path d="M50 200l40-8M130 186l30-6M190 168l30-2M230 170l20 10" stroke="#1020e0" stroke-width="11" fill="none"/><path d="M100 196l20-4M150 180l30-8" stroke="#10c020" stroke-width="11" fill="none"/><path d="M36 298l40-14 40-24 40 26 50-22 50 24" stroke="#ff20e8" stroke-width="11" fill="none"/></g></svg>
<svg style="position:absolute;left:1291px;top:56px;" width="40" height="50" viewBox="0 56 320 400"><g transform="translate(0 56)"><ellipse cx="170" cy="384" rx="102" ry="14" fill="#2e3640"/><path d="M120 355h100l14 24H106z" fill="#4a5868"/><path d="M280 88l36 10q6 2 6 10v232q0 8-8 11l-34 16z" fill="url(#gside)"/><path d="M30 182L280 88v280L12 345q-8-1-7-10l8-62z" fill="#b8c6d8" stroke="#6a7a90" stroke-width="6" stroke-linejoin="round"/><path d="M8 305l272 0v63L12 345q-8-1-7-10z" fill="url(#gbase)"/><path d="M38 196L272 108v190H30l8-60z" fill="#2a2a2e"/><rect x="22" y="326" width="34" height="14" fill="#5a6a7e"/><rect x="222" y="334" width="44" height="15" fill="#5a6a7e"/><circle cx="140" cy="340" r="7" fill="#7e92ac"/><path d="M40 182l70-12 60-16 90-20" stroke="#c8c010" stroke-width="10" fill="none"/><path d="M40 270l70-12 60-16 90-20" stroke="#f010d8" stroke-width="10" fill="none"/><path d="M40 296l70-12 60-16 90-20" stroke="#7060d0" stroke-width="10" fill="none"/><path d="M40 236l30-14 30 8 40-22 40 16 40-18 40 6" stroke="#d86020" stroke-width="9" fill="none"/><path d="M40 226l40 2 40-10 40 12 50-20 50 2" stroke="#18a838" stroke-width="8" fill="none" stroke-dasharray="22 14"/><path d="M44 232l30 4M120 222l30 6M200 214l30 0" stroke="#1848c0" stroke-width="8" fill="none"/></g></svg>
<div style="left:0px;top:113px;width:2558px;height:1250px;background:#868686;"></div>
<div style="left:0px;top:113px;width:2558px;height:4.6px;background:linear-gradient(180deg,#9a9a9a,#787878 40%,#7c7c7c);"></div>
<div style="left:2.35px;top:117.7px;width:1791.65px;height:78.1px;background:#fdfdfd;"></div>
<div style="left:6.25px;top:121.6px;width:1784.55px;height:70.9px;background:linear-gradient(135deg,#8a8a8a,#9c9c9c);"></div>
<div style="left:8.1px;top:143.9px;width:1780.6px;height:46.2px;background:#ececec;"></div>
<div style="left:8.1px;top:123.1px;width:1780.6px;height:21.1px;background:linear-gradient(90deg,#e3eaf5,#e7edf7 50%,#ebf0f9);border-radius:6px 6px 0 0;"></div>
<div style="left:8.1px;top:143.9px;width:1780.6px;height:1.4px;background:#a9adb3;"></div>
<div class="t" style="left:15.45px;top:124.85px;font-family:'DejaVu Sans','Liberation Sans',sans-serif;font-size:14.3px;line-height:19px;font-weight:700;color:#505050;letter-spacing:-0.406px;">View</div>
<div style="left:8.3px;top:150px;width:249.5px;height:28.2px;background:#fff;border-top:4px solid #787878;border-left:2.5px solid #787878;border-bottom:2px solid #e4e4e4;border-right:2px solid #e4e4e4;"></div>
<div class="t" style="left:13.80px;top:155.16px;font-family:'DejaVu Sans','Liberation Sans',sans-serif;font-size:16px;line-height:21px;font-weight:400;color:#000;letter-spacing:-0.173px;">Primaries and secondaries</div>
<div style="left:234.5px;top:154px;width:22px;height:24px;background:#f0f0f0;border:1.5px solid #fff;border-right-color:#707070;border-bottom-color:#707070;box-shadow:1px 1px 0 #a0a0a0;"></div>
<svg style="position:absolute;left:239px;top:162px" width="12" height="8" viewBox="0 0 12 8"><path d="M1 1h10L6 7z" fill="#000"/></svg>
<div style="left:270px;top:148.8px;width:1480px;height:33.5px;background:#efefef;border-top:1.5px solid #b0b0b0;border-left:1.5px solid #b0b0b0;border-bottom:2px solid #fbfbfb;border-right:2px solid #fbfbfb;"></div>
<div class="t" style="left:272.30px;top:146.33px;font-family:'Liberation Sans',sans-serif;font-size:20.7px;line-height:27px;font-weight:400;color:#000;letter-spacing:0.140px;-webkit-text-stroke:0.55px #000;">Color Space: HDTV Rec709 , White Point: D65, EOTF:  SDR, Power law (black compensation) w/gamma = 2.20, # of measures: 0 [13:44:18]</div>
<div style="left:1758.5px;top:150.5px;width:20px;height:14.5px;background:#f2f2f2;border:1.5px solid #fcfcfc;border-right:2px solid #8a8a8a;border-bottom:2px solid #8a8a8a;"></div>
<svg style="position:absolute;left:1762.5px;top:154.0px" width="11" height="7" viewBox="0 0 11 7"><path d="M1 6l4.5-5 4.5 5z" fill="#000"/></svg>
<div style="left:1758.5px;top:167px;width:20px;height:14.5px;background:#f2f2f2;border:1.5px solid #fcfcfc;border-right:2px solid #8a8a8a;border-bottom:2px solid #8a8a8a;"></div>
<svg style="position:absolute;left:1762.5px;top:170.5px" width="11" height="7" viewBox="0 0 11 7"><path d="M1 1h9l-4.5 5z" fill="#000"/></svg>
<div style="left:1795.3px;top:117.7px;width:388.9px;height:78.1px;background:#fdfdfd;"></div>
<div style="left:1799.2px;top:121.6px;width:381.8px;height:70.9px;background:linear-gradient(135deg,#8a8a8a,#9c9c9c);"></div>
<div style="left:1801.05px;top:143.9px;width:377.85px;height:46.2px;background:#ececec;"></div>
<div style="left:1801.05px;top:123.1px;width:377.85px;height:21.1px;background:linear-gradient(90deg,#e3eaf5,#e7edf7 50%,#ebf0f9);border-radius:6px 6px 0 0;"></div>
<div style="left:1801.05px;top:143.9px;width:377.85px;height:1.4px;background:#a9adb3;"></div>
<div class="t" style="left:1807.50px;top:124.85px;font-family:'DejaVu Sans','Liberation Sans',sans-serif;font-size:14.3px;line-height:19px;font-weight:700;color:#505050;letter-spacing:0.073px;">Sensor</div>
<div style="left:1802px;top:146px;width:368px;height:21px;background:#f0f0f0;"></div>
<div style="left:1805px;top:168.5px;width:82px;height:19px;background:#f0f0f0;"></div>
<div class="t" style="left:1805.00px;top:146.40px;font-family:'DejaVu Sans','Liberation Sans',sans-serif;font-size:15.6px;line-height:20px;font-weight:400;color:#000;letter-spacing:0.035px;">Simulated sensor</div>
<div class="t" style="left:1807.50px;top:167.20px;font-family:'DejaVu Sans','Liberation Sans',sans-serif;font-size:15.6px;line-height:20px;font-weight:400;color:#000;letter-spacing:-0.064px;">Adaptive</div>
<svg style="position:absolute;left:1938px;top:167px" width="18" height="20" viewBox="0 0 18 20"><path d="M2 2l14 8-14 8z" fill="#7fd44a" stroke="#9adf70" stroke-width="1"/></svg>
<svg style="position:absolute;left:2143.5px;top:164px" width="26" height="26" viewBox="0 0 26 26"><defs><linearGradient id="ged" x1="0" y1="0" x2="1" y2="1"><stop offset="0" stop-color="#f4f8ff"/><stop offset=".6" stop-color="#c4d8f8"/><stop offset="1" stop-color="#78a4ec"/></linearGradient></defs><path d="M3.500 5.500l12.500-2.500q1.500-.2 1.700 1.300l1.300 16q.2 1.500-1.300 1.700l-11.500 1.500q-1.500.2-1.700-1.300l-2-15q-.2-1.500 1-1.700z" fill="url(#ged)" stroke="#2c60cc" stroke-width="2.400" stroke-linejoin="round"/><path d="M8 14.500l2.500 3 5.500-6.500" stroke="#dcb040" stroke-width="1.800" fill="none"/><path d="M15 16.500l7.500-4.500" stroke="#8098c8" stroke-width="2.600"/><path d="M21 12.800l2.500-1.500" stroke="#e05038" stroke-width="2.600"/></svg>
<div style="left:2182.4px;top:117.7px;width:156.8px;height:78.1px;background:#fdfdfd;"></div>
<div style="left:2186.3px;top:121.6px;width:149.7px;height:70.9px;background:linear-gradient(135deg,#8a8a8a,#9c9c9c);"></div>
<div style="left:2188.15px;top:143.9px;width:145.75px;height:46.2px;background:#ececec;"></div>
<div style="left:2188.15px;top:123.1px;width:145.75px;height:21.1px;background:linear-gradient(90deg,#e3eaf5,#e7edf7 50%,#ebf0f9);border-radius:6px 6px 0 0;"></div>
<div style="left:2188.15px;top:143.9px;width:145.75px;height:1.4px;background:#a9adb3;"></div>
<div class="t" style="left:2195.00px;top:124.85px;font-family:'DejaVu Sans','Liberation Sans',sans-serif;font-size:14.3px;line-height:19px;font-weight:700;color:#505050;letter-spacing:0.087px;">Generator</div>
<div style="left:2189px;top:146px;width:130px;height:21px;background:#f0f0f0;"></div>
<div class="t" style="left:2190.00px;top:146.40px;font-family:'DejaVu Sans','Liberation Sans',sans-serif;font-size:15.6px;line-height:20px;font-weight:400;color:#000;letter-spacing:-0.277px;">DVD manual</div>
<svg style="position:absolute;left:2306.5px;top:166px" width="26" height="26" viewBox="0 0 26 26"><defs><linearGradient id="ged" x1="0" y1="0" x2="1" y2="1"><stop offset="0" stop-color="#f4f8ff"/><stop offset=".6" stop-color="#c4d8f8"/><stop offset="1" stop-color="#78a4ec"/></linearGradient></defs><path d="M3.500 5.500l12.500-2.500q1.500-.2 1.700 1.300l1.300 16q.2 1.500-1.300 1.700l-11.500 1.500q-1.500.2-1.700-1.300l-2-15q-.2-1.500 1-1.700z" fill="url(#ged)" stroke="#2c60cc" stroke-width="2.400" stroke-linejoin="round"/><path d="M8 14.500l2.500 3 5.500-6.500" stroke="#dcb040" stroke-width="1.800" fill="none"/><path d="M15 16.500l7.500-4.500" stroke="#8098c8" stroke-width="2.600"/><path d="M21 12.800l2.500-1.500" stroke="#e05038" stroke-width="2.600"/></svg>
<div style="left:2338.4px;top:117.7px;width:193.5px;height:78.1px;background:#fdfdfd;"></div>
<div style="left:2342.3px;top:121.6px;width:186.4px;height:70.9px;background:linear-gradient(135deg,#8a8a8a,#9c9c9c);"></div>
<div style="left:2344.15px;top:143.9px;width:182.45px;height:46.2px;background:#ececec;"></div>
<div style="left:2344.15px;top:123.1px;width:182.45px;height:21.1px;background:linear-gradient(90deg,#e3eaf5,#e7edf7 50%,#ebf0f9);border-radius:6px 6px 0 0;"></div>
<div style="left:2344.15px;top:143.9px;width:182.45px;height:1.4px;background:#a9adb3;"></div>
<div class="t" style="left:2350.50px;top:124.85px;font-family:'DejaVu Sans','Liberation Sans',sans-serif;font-size:14.3px;line-height:19px;font-weight:700;color:#505050;letter-spacing:0.136px;">Parameters</div>
<div style="left:2352px;top:148px;width:140px;height:18px;background:#f0f0f0;"></div>
<div style="left:2352px;top:170px;width:165px;height:18px;background:#f0f0f0;"></div>
<div style="left:2353.5px;top:149.5px;width:14px;height:14px;background:#fff;border-top:2px solid #8a8a8a;border-left:2px solid #8a8a8a;border-right:1px solid #e8e8e8;border-bottom:1px solid #e8e8e8;"></div>
<div class="t" style="left:2376.00px;top:147.20px;font-family:'DejaVu Sans','Liberation Sans',sans-serif;font-size:15.6px;line-height:20px;font-weight:400;color:#000;letter-spacing:0.052px;">Reference</div>
<div style="left:2353.5px;top:171px;width:14px;height:14px;background:#f4f4f4;border-top:2px solid #8a8a8a;border-left:2px solid #8a8a8a;border-right:1px solid #e8e8e8;border-bottom:1px solid #e8e8e8;"></div>
<div class="t" style="left:2376.00px;top:168.40px;font-family:'DejaVu Sans','Liberation Sans',sans-serif;font-size:15.6px;line-height:20px;font-weight:400;color:#a8a8a8;letter-spacing:-0.098px;text-shadow:1px 1px 0 #fff;">XYZ Adjustment</div>
<div style="left:2.35px;top:199.5px;width:2422.55px;height:273.9px;background:#fdfdfd;"></div>
<div style="left:6.25px;top:203.4px;width:2415.45px;height:270px;background:linear-gradient(180deg,#909090 0,#909090 calc(100% - 2px),#c8c8c8 calc(100% - 2px));"></div>
<div style="left:8.1px;top:222.4px;width:2411.5px;height:248.6px;background:#ececec;"></div>
<div style="left:8.1px;top:204.9px;width:2411.5px;height:17.8px;background:linear-gradient(90deg,#e3eaf5,#e7edf7 50%,#ebf0f9);border-radius:6px 6px 0 0;"></div>
<div style="left:8.1px;top:222.4px;width:2411.5px;height:1.4px;background:#a9adb3;"></div>
<div style="left:8.1px;top:204.9px;width:2411.5px;height:266.70000000000005px;border:1.9px solid #e4de18;border-top-color:transparent;border-radius:6px 6px 0 0;"></div>
<div class="t" style="left:18.75px;top:207.16px;font-family:'DejaVu Sans','Liberation Sans',sans-serif;font-size:11.4px;line-height:15px;font-weight:700;color:#505050;letter-spacing:-0.165px;">( Average dE: 2.46 [0.60,1.46,1.06] max: 6.65 [CIE2000] )</div>
<div style="left:10px;top:221px;width:2386px;height:247px;background:#f0f0f0;border-top:2px solid #7d7d7d;border-left:2.5px solid #7d7d7d;border-right:1.5px solid #fdfdfd;border-bottom:1.5px solid #fdfdfd;overflow:hidden;"></div>
<div style="left:12.5px;top:222.5px;width:67px;height:28.25px;background:#f0f0f0;border-top:1.5px solid #fff;border-left:1.5px solid #fff;border-right:1.5px solid #6e6e6e;border-bottom:2px solid #6e6e6e;"></div>
<div class="t" style="left:26.95px;top:228.44px;font-family:'Liberation Sans',sans-serif;font-size:14.6px;line-height:19px;font-weight:700;color:#000;">Color</div>
<div style="left:79.5px;top:222.5px;width:284.25px;height:28.25px;background:#f0c4c4;border-top:1.5px solid #fff;border-left:1.5px solid #fff;border-right:1.5px solid #6e6e6e;border-bottom:2px solid #6e6e6e;"></div>
<div class="t" style="left:207.84px;top:228.44px;font-family:'Liberation Sans',sans-serif;font-size:14.6px;line-height:19px;font-weight:700;color:#000;">Red</div>
<div style="left:363.75px;top:222.5px;width:285.75px;height:28.25px;background:#c4f0c4;border-top:1.5px solid #fff;border-left:1.5px solid #fff;border-right:1.5px solid #6e6e6e;border-bottom:2px solid #6e6e6e;"></div>
<div class="t" style="left:485.53px;top:228.44px;font-family:'Liberation Sans',sans-serif;font-size:14.6px;line-height:19px;font-weight:700;color:#000;">Green</div>
<div style="left:649.5px;top:222.5px;width:282.25px;height:28.25px;background:#c8c4f0;border-top:1.5px solid #fff;border-left:1.5px solid #fff;border-right:1.5px solid #6e6e6e;border-bottom:2px solid #6e6e6e;"></div>
<div class="t" style="left:774.81px;top:228.44px;font-family:'Liberation Sans',sans-serif;font-size:14.6px;line-height:19px;font-weight:700;color:#000;">Blue</div>
<div style="left:931.75px;top:222.5px;width:287.75px;height:28.25px;background:#f0f0c4;border-top:1.5px solid #fff;border-left:1.5px solid #fff;border-right:1.5px solid #6e6e6e;border-bottom:2px solid #6e6e6e;"></div>
<div class="t" style="left:1052.91px;top:228.44px;font-family:'Liberation Sans',sans-serif;font-size:14.6px;line-height:19px;font-weight:700;color:#000;">Yellow</div>
<div style="left:1219.5px;top:222.5px;width:282.25px;height:28.25px;background:#c4f0f0;border-top:1.5px solid #fff;border-left:1.5px solid #fff;border-right:1.5px solid #6e6e6e;border-bottom:2px solid #6e6e6e;"></div>
<div class="t" style="left:1342.78px;top:228.44px;font-family:'Liberation Sans',sans-serif;font-size:14.6px;line-height:19px;font-weight:700;color:#000;">Cyan</div>
<div style="left:1501.75px;top:222.5px;width:304px;height:28.25px;background:#f0c4f0;border-top:1.5px solid #fff;border-left:1.5px solid #fff;border-right:1.5px solid #6e6e6e;border-bottom:2px solid #6e6e6e;"></div>
<div class="t" style="left:1624.15px;top:228.44px;font-family:'Liberation Sans',sans-serif;font-size:14.6px;line-height:19px;font-weight:700;color:#000;">Magenta</div>
<div style="left:1805.75px;top:222.5px;width:285px;height:28.25px;background:#f0f0f0;border-top:1.5px solid #fff;border-left:1.5px solid #fff;border-right:1.5px solid #6e6e6e;border-bottom:2px solid #6e6e6e;"></div>
<div class="t" style="left:1928.38px;top:228.44px;font-family:'Liberation Sans',sans-serif;font-size:14.6px;line-height:19px;font-weight:700;color:#000;">White</div>
<div style="left:2090.75px;top:222.5px;width:282.5px;height:28.25px;background:#f0f0f0;border-top:1.5px solid #fff;border-left:1.5px solid #fff;border-right:1.5px solid #6e6e6e;border-bottom:2px solid #6e6e6e;"></div>
<div class="t" style="left:2212.52px;top:228.44px;font-family:'Liberation Sans',sans-serif;font-size:14.6px;line-height:19px;font-weight:700;color:#000;">Black</div>
<div style="left:12.5px;top:250.75px;width:67px;height:30.75px;background:#f0f0f0;border-top:1.5px solid #fff;border-left:1.5px solid #fff;border-right:1.5px solid #6e6e6e;border-bottom:2px solid #6e6e6e;"></div>
<div class="t" style="left:41.94px;top:258.19px;font-family:'Liberation Sans',sans-serif;font-size:14.6px;line-height:19px;font-weight:700;color:#000;">x</div>
<div style="left:79.5px;top:250.75px;width:284.25px;height:30.75px;background:#fff;border-right:1.5px solid #c4c4c4;border-bottom:1.5px solid #c4c4c4;"></div>
<div class="t" style="left:319.48px;top:259.30px;font-family:'Liberation Sans',sans-serif;font-size:13.7px;line-height:18px;font-weight:400;color:#000;">0.6413</div>
<div style="left:363.75px;top:250.75px;width:285.75px;height:30.75px;background:#fff;border-right:1.5px solid #c4c4c4;border-bottom:1.5px solid #c4c4c4;"></div>
<div class="t" style="left:605.23px;top:259.30px;font-family:'Liberation Sans',sans-serif;font-size:13.7px;line-height:18px;font-weight:400;color:#000;">0.2986</div>
<div style="left:649.5px;top:250.75px;width:282.25px;height:30.75px;background:#fff;border-right:1.5px solid #c4c4c4;border-bottom:1.5px solid #c4c4c4;"></div>
<div class="t" style="left:887.48px;top:259.30px;font-family:'Liberation Sans',sans-serif;font-size:13.7px;line-height:18px;font-weight:400;color:#000;">0.1565</div>
<div style="left:931.75px;top:250.75px;width:287.75px;height:30.75px;background:#fff;border-right:1.5px solid #c4c4c4;border-bottom:1.5px solid #c4c4c4;"></div>
<div class="t" style="left:1175.22px;top:259.30px;font-family:'Liberation Sans',sans-serif;font-size:13.7px;line-height:18px;font-weight:400;color:#000;">0.4210</div>
<div style="left:1219.5px;top:250.75px;width:282.25px;height:30.75px;background:#fff;border-right:1.5px solid #c4c4c4;border-bottom:1.5px solid #c4c4c4;"></div>
<div class="t" style="left:1457.47px;top:259.30px;font-family:'Liberation Sans',sans-serif;font-size:13.7px;line-height:18px;font-weight:400;color:#000;">0.2278</div>
<div style="left:1501.75px;top:250.75px;width:304px;height:30.75px;background:#fff;border-right:1.5px solid #c4c4c4;border-bottom:1.5px solid #c4c4c4;"></div>
<div class="t" style="left:1761.47px;top:259.30px;font-family:'Liberation Sans',sans-serif;font-size:13.7px;line-height:18px;font-weight:400;color:#000;">0.3326</div>
<div style="left:1805.75px;top:250.75px;width:285px;height:30.75px;background:#fff;border-right:1.5px solid #c4c4c4;border-bottom:1.5px solid #c4c4c4;"></div>
<div class="t" style="left:2046.47px;top:259.30px;font-family:'Liberation Sans',sans-serif;font-size:13.7px;line-height:18px;font-weight:400;color:#000;">0.3202</div>
<div style="left:2090.75px;top:250.75px;width:282.5px;height:30.75px;background:#fff;border-right:1.5px solid #c4c4c4;border-bottom:1.5px solid #c4c4c4;"></div>
<div class="t" style="left:2328.97px;top:259.30px;font-family:'Liberation Sans',sans-serif;font-size:13.7px;line-height:18px;font-weight:400;color:#000;">0.2439</div>
<div style="left:12.5px;top:281.5px;width:67px;height:31.75px;background:#f0f0f0;border-top:1.5px solid #fff;border-left:1.5px solid #fff;border-right:1.5px solid #6e6e6e;border-bottom:2px solid #6e6e6e;"></div>
<div class="t" style="left:41.94px;top:288.94px;font-family:'Liberation Sans',sans-serif;font-size:14.6px;line-height:19px;font-weight:700;color:#000;">y</div>
<div style="left:79.5px;top:281.5px;width:284.25px;height:31.75px;background:#fff;border-right:1.5px solid #c4c4c4;border-bottom:1.5px solid #c4c4c4;"></div>
<div class="t" style="left:319.48px;top:290.05px;font-family:'Liberation Sans',sans-serif;font-size:13.7px;line-height:18px;font-weight:400;color:#000;">0.3314</div>
<div style="left:363.75px;top:281.5px;width:285.75px;height:31.75px;background:#fff;border-right:1.5px solid #c4c4c4;border-bottom:1.5px solid #c4c4c4;"></div>
<div class="t" style="left:605.23px;top:290.05px;font-family:'Liberation Sans',sans-serif;font-size:13.7px;line-height:18px;font-weight:400;color:#000;">0.6083</div>
<div style="left:649.5px;top:281.5px;width:282.25px;height:31.75px;background:#fff;border-right:1.5px solid #c4c4c4;border-bottom:1.5px solid #c4c4c4;"></div>
<div class="t" style="left:887.48px;top:290.05px;font-family:'Liberation Sans',sans-serif;font-size:13.7px;line-height:18px;font-weight:400;color:#000;">0.0600</div>
<div style="left:931.75px;top:281.5px;width:287.75px;height:31.75px;background:#fff;border-right:1.5px solid #c4c4c4;border-bottom:1.5px solid #c4c4c4;"></div>
<div class="t" style="left:1175.22px;top:290.05px;font-family:'Liberation Sans',sans-serif;font-size:13.7px;line-height:18px;font-weight:400;color:#000;">0.5095</div>
<div style="left:1219.5px;top:281.5px;width:282.25px;height:31.75px;background:#fff;border-right:1.5px solid #c4c4c4;border-bottom:1.5px solid #c4c4c4;"></div>
<div class="t" style="left:1457.47px;top:290.05px;font-family:'Liberation Sans',sans-serif;font-size:13.7px;line-height:18px;font-weight:400;color:#000;">0.3445</div>
<div style="left:1501.75px;top:281.5px;width:304px;height:31.75px;background:#fff;border-right:1.5px solid #c4c4c4;border-bottom:1.5px solid #c4c4c4;"></div>
<div class="t" style="left:1761.47px;top:290.05px;font-family:'Liberation Sans',sans-serif;font-size:13.7px;line-height:18px;font-weight:400;color:#000;">0.1610</div>
<div style="left:1805.75px;top:281.5px;width:285px;height:31.75px;background:#fff;border-right:1.5px solid #c4c4c4;border-bottom:1.5px solid #c4c4c4;"></div>
<div class="t" style="left:2046.47px;top:290.05px;font-family:'Liberation Sans',sans-serif;font-size:13.7px;line-height:18px;font-weight:400;color:#000;">0.3426</div>
<div style="left:2090.75px;top:281.5px;width:282.5px;height:31.75px;background:#fff;border-right:1.5px solid #c4c4c4;border-bottom:1.5px solid #c4c4c4;"></div>
<div class="t" style="left:2328.97px;top:290.05px;font-family:'Liberation Sans',sans-serif;font-size:13.7px;line-height:18px;font-weight:400;color:#000;">0.1979</div>
<div style="left:12.5px;top:313.25px;width:67px;height:31px;background:#f0f0f0;border-top:1.5px solid #fff;border-left:1.5px solid #fff;border-right:1.5px solid #6e6e6e;border-bottom:2px solid #6e6e6e;"></div>
<div class="t" style="left:41.13px;top:320.69px;font-family:'Liberation Sans',sans-serif;font-size:14.6px;line-height:19px;font-weight:700;color:#000;">Y</div>
<div style="left:79.5px;top:313.25px;width:284.25px;height:31px;background:#fff;border-right:1.5px solid #c4c4c4;border-bottom:1.5px solid #c4c4c4;"></div>
<div class="t" style="left:319.48px;top:321.80px;font-family:'Liberation Sans',sans-serif;font-size:13.7px;line-height:18px;font-weight:400;color:#000;">72.348</div>
<div style="left:363.75px;top:313.25px;width:285.75px;height:31px;background:#fff;border-right:1.5px solid #c4c4c4;border-bottom:1.5px solid #c4c4c4;"></div>
<div class="t" style="left:597.62px;top:321.80px;font-family:'Liberation Sans',sans-serif;font-size:13.7px;line-height:18px;font-weight:400;color:#000;">246.295</div>
<div style="left:649.5px;top:313.25px;width:282.25px;height:31px;background:#fff;border-right:1.5px solid #c4c4c4;border-bottom:1.5px solid #c4c4c4;"></div>
<div class="t" style="left:887.48px;top:321.80px;font-family:'Liberation Sans',sans-serif;font-size:13.7px;line-height:18px;font-weight:400;color:#000;">22.513</div>
<div style="left:931.75px;top:313.25px;width:287.75px;height:31px;background:#fff;border-right:1.5px solid #c4c4c4;border-bottom:1.5px solid #c4c4c4;"></div>
<div class="t" style="left:1167.62px;top:321.80px;font-family:'Liberation Sans',sans-serif;font-size:13.7px;line-height:18px;font-weight:400;color:#000;">335.509</div>
<div style="left:1219.5px;top:313.25px;width:282.25px;height:31px;background:#fff;border-right:1.5px solid #c4c4c4;border-bottom:1.5px solid #c4c4c4;"></div>
<div class="t" style="left:1449.87px;top:321.80px;font-family:'Liberation Sans',sans-serif;font-size:13.7px;line-height:18px;font-weight:400;color:#000;">264.468</div>
<div style="left:1501.75px;top:313.25px;width:304px;height:31px;background:#fff;border-right:1.5px solid #c4c4c4;border-bottom:1.5px solid #c4c4c4;"></div>
<div class="t" style="left:1761.47px;top:321.80px;font-family:'Liberation Sans',sans-serif;font-size:13.7px;line-height:18px;font-weight:400;color:#000;">93.172</div>
<div style="left:1805.75px;top:313.25px;width:285px;height:31px;background:#fff;border-right:1.5px solid #c4c4c4;border-bottom:1.5px solid #c4c4c4;"></div>
<div class="t" style="left:2038.87px;top:321.80px;font-family:'Liberation Sans',sans-serif;font-size:13.7px;line-height:18px;font-weight:400;color:#000;">343.681</div>
<div style="left:2090.75px;top:313.25px;width:282.5px;height:31px;background:#fff;border-right:1.5px solid #c4c4c4;border-bottom:1.5px solid #c4c4c4;"></div>
<div class="t" style="left:2336.58px;top:321.80px;font-family:'Liberation Sans',sans-serif;font-size:13.7px;line-height:18px;font-weight:400;color:#000;">0.022</div>
<div style="left:12.5px;top:344.25px;width:67px;height:31.5px;background:#f0f0f0;border-top:1.5px solid #fff;border-left:1.5px solid #fff;border-right:1.5px solid #6e6e6e;border-bottom:2px solid #6e6e6e;"></div>
<div class="t" style="left:21.26px;top:351.69px;font-family:'Liberation Sans',sans-serif;font-size:14.6px;line-height:19px;font-weight:700;color:#000;">Delta E</div>
<div style="left:79.5px;top:344.25px;width:284.25px;height:31.5px;background:#aaffaa;border-right:1.5px solid #c4c4c4;border-bottom:1.5px solid #c4c4c4;"></div>
<div class="t" style="left:341.05px;top:351.99px;font-family:'Liberation Sans',sans-serif;font-size:14.6px;line-height:19px;font-weight:700;color:#000;">0.7</div>
<div style="left:363.75px;top:344.25px;width:285.75px;height:31.5px;background:#aaffaa;border-right:1.5px solid #c4c4c4;border-bottom:1.5px solid #c4c4c4;"></div>
<div class="t" style="left:626.80px;top:351.99px;font-family:'Liberation Sans',sans-serif;font-size:14.6px;line-height:19px;font-weight:700;color:#000;">0.6</div>
<div style="left:649.5px;top:344.25px;width:282.25px;height:31.5px;background:#ffffaa;border-right:1.5px solid #c4c4c4;border-bottom:1.5px solid #c4c4c4;"></div>
<div class="t" style="left:909.05px;top:351.99px;font-family:'Liberation Sans',sans-serif;font-size:14.6px;line-height:19px;font-weight:700;color:#000;">2.1</div>
<div style="left:931.75px;top:344.25px;width:287.75px;height:31.5px;background:#aaffaa;border-right:1.5px solid #c4c4c4;border-bottom:1.5px solid #c4c4c4;"></div>
<div class="t" style="left:1196.80px;top:351.99px;font-family:'Liberation Sans',sans-serif;font-size:14.6px;line-height:19px;font-weight:700;color:#000;">1.4</div>
<div style="left:1219.5px;top:344.25px;width:282.25px;height:31.5px;background:#ffaaaa;border-right:1.5px solid #c4c4c4;border-bottom:1.5px solid #c4c4c4;"></div>
<div class="t" style="left:1479.05px;top:351.99px;font-family:'Liberation Sans',sans-serif;font-size:14.6px;line-height:19px;font-weight:700;color:#000;">4.0</div>
<div style="left:1501.75px;top:344.25px;width:304px;height:31.5px;background:#aaffaa;border-right:1.5px solid #c4c4c4;border-bottom:1.5px solid #c4c4c4;"></div>
<div class="t" style="left:1783.05px;top:351.99px;font-family:'Liberation Sans',sans-serif;font-size:14.6px;line-height:19px;font-weight:700;color:#000;">1.8</div>
<div style="left:1805.75px;top:344.25px;width:285px;height:31.5px;background:#ffaaaa;border-right:1.5px solid #c4c4c4;border-bottom:1.5px solid #c4c4c4;"></div>
<div class="t" style="left:2068.05px;top:351.99px;font-family:'Liberation Sans',sans-serif;font-size:14.6px;line-height:19px;font-weight:700;color:#000;">6.7</div>
<div style="left:2090.75px;top:344.25px;width:282.5px;height:31.5px;background:#e0e0e0;border-right:1.5px solid #c4c4c4;border-bottom:1.5px solid #c4c4c4;"></div>
<div style="left:12.5px;top:375.75px;width:67px;height:31px;background:#f0f0f0;border-top:1.5px solid #fff;border-left:1.5px solid #fff;border-right:1.5px solid #6e6e6e;border-bottom:2px solid #6e6e6e;"></div>
<div class="t" style="left:18.82px;top:383.19px;font-family:'Liberation Sans',sans-serif;font-size:14.6px;line-height:19px;font-weight:700;color:#000;">delta xy</div>
<div style="left:79.5px;top:375.75px;width:284.25px;height:31px;background:#f0f0f0;border-right:1.5px solid #c4c4c4;border-bottom:1.5px solid #c4c4c4;"></div>
<div class="t" style="left:319.48px;top:384.30px;font-family:'Liberation Sans',sans-serif;font-size:13.7px;line-height:18px;font-weight:400;color:#000;">0.0019</div>
<div style="left:363.75px;top:375.75px;width:285.75px;height:31px;background:#f0f0f0;border-right:1.5px solid #c4c4c4;border-bottom:1.5px solid #c4c4c4;"></div>
<div class="t" style="left:605.23px;top:384.30px;font-family:'Liberation Sans',sans-serif;font-size:13.7px;line-height:18px;font-weight:400;color:#000;">0.0084</div>
<div style="left:649.5px;top:375.75px;width:282.25px;height:31px;background:#f0f0f0;border-right:1.5px solid #c4c4c4;border-bottom:1.5px solid #c4c4c4;"></div>
<div class="t" style="left:887.48px;top:384.30px;font-family:'Liberation Sans',sans-serif;font-size:13.7px;line-height:18px;font-weight:400;color:#000;">0.0065</div>
<div style="left:931.75px;top:375.75px;width:287.75px;height:31px;background:#f0f0f0;border-right:1.5px solid #c4c4c4;border-bottom:1.5px solid #c4c4c4;"></div>
<div class="t" style="left:1175.22px;top:384.30px;font-family:'Liberation Sans',sans-serif;font-size:13.7px;line-height:18px;font-weight:400;color:#000;">0.0045</div>
<div style="left:1219.5px;top:375.75px;width:282.25px;height:31px;background:#f0f0f0;border-right:1.5px solid #c4c4c4;border-bottom:1.5px solid #c4c4c4;"></div>
<div class="t" style="left:1457.47px;top:384.30px;font-family:'Liberation Sans',sans-serif;font-size:13.7px;line-height:18px;font-weight:400;color:#000;">0.0161</div>
<div style="left:1501.75px;top:375.75px;width:304px;height:31px;background:#f0f0f0;border-right:1.5px solid #c4c4c4;border-bottom:1.5px solid #c4c4c4;"></div>
<div class="t" style="left:1761.47px;top:384.30px;font-family:'Liberation Sans',sans-serif;font-size:13.7px;line-height:18px;font-weight:400;color:#000;">0.0135</div>
<div style="left:1805.75px;top:375.75px;width:285px;height:31px;background:#f0f0f0;border-right:1.5px solid #c4c4c4;border-bottom:1.5px solid #c4c4c4;"></div>
<div class="t" style="left:2046.47px;top:384.30px;font-family:'Liberation Sans',sans-serif;font-size:13.7px;line-height:18px;font-weight:400;color:#000;">0.0155</div>
<div style="left:2090.75px;top:375.75px;width:282.5px;height:31px;background:#f0f0f0;border-right:1.5px solid #c4c4c4;border-bottom:1.5px solid #c4c4c4;"></div>
<div style="left:12.5px;top:406.75px;width:67px;height:31.5px;background:#f0f0f0;border-top:1.5px solid #fff;border-left:1.5px solid #fff;border-right:1.5px solid #6e6e6e;border-bottom:2px solid #6e6e6e;"></div>
<div class="t" style="left:22.48px;top:414.19px;font-family:'Liberation Sans',sans-serif;font-size:14.6px;line-height:19px;font-weight:700;color:#000;">delta L</div>
<div style="left:79.5px;top:406.75px;width:284.25px;height:31.5px;background:#e0e0e0;border-right:1.5px solid #c4c4c4;border-bottom:1.5px solid #c4c4c4;"></div>
<div class="t" style="left:321.79px;top:415.30px;font-family:'Liberation Sans',sans-serif;font-size:13.7px;line-height:18px;font-weight:400;color:#000;">-1.0 %</div>
<div style="left:363.75px;top:406.75px;width:285.75px;height:31.5px;background:#e0e0e0;border-right:1.5px solid #c4c4c4;border-bottom:1.5px solid #c4c4c4;"></div>
<div class="t" style="left:604.10px;top:415.30px;font-family:'Liberation Sans',sans-serif;font-size:13.7px;line-height:18px;font-weight:400;color:#000;">+0.2 %</div>
<div style="left:649.5px;top:406.75px;width:282.25px;height:31.5px;background:#e0e0e0;border-right:1.5px solid #c4c4c4;border-bottom:1.5px solid #c4c4c4;"></div>
<div class="t" style="left:889.79px;top:415.30px;font-family:'Liberation Sans',sans-serif;font-size:13.7px;line-height:18px;font-weight:400;color:#000;">-9.3 %</div>
<div style="left:931.75px;top:406.75px;width:287.75px;height:31.5px;background:#e0e0e0;border-right:1.5px solid #c4c4c4;border-bottom:1.5px solid #c4c4c4;"></div>
<div class="t" style="left:1174.10px;top:415.30px;font-family:'Liberation Sans',sans-serif;font-size:13.7px;line-height:18px;font-weight:400;color:#000;">+5.2 %</div>
<div style="left:1219.5px;top:406.75px;width:282.25px;height:31.5px;background:#e0e0e0;border-right:1.5px solid #c4c4c4;border-bottom:1.5px solid #c4c4c4;"></div>
<div class="t" style="left:1459.79px;top:415.30px;font-family:'Liberation Sans',sans-serif;font-size:13.7px;line-height:18px;font-weight:400;color:#000;">-2.3 %</div>
<div style="left:1501.75px;top:406.75px;width:304px;height:31.5px;background:#e0e0e0;border-right:1.5px solid #c4c4c4;border-bottom:1.5px solid #c4c4c4;"></div>
<div class="t" style="left:1763.79px;top:415.30px;font-family:'Liberation Sans',sans-serif;font-size:13.7px;line-height:18px;font-weight:400;color:#000;">-4.8 %</div>
<div style="left:1805.75px;top:406.75px;width:285px;height:31.5px;background:#e0e0e0;border-right:1.5px solid #c4c4c4;border-bottom:1.5px solid #c4c4c4;"></div>
<div style="left:2090.75px;top:406.75px;width:282.5px;height:31.5px;background:#e0e0e0;border-right:1.5px solid #c4c4c4;border-bottom:1.5px solid #c4c4c4;"></div>
<div style="left:12.5px;top:438.25px;width:67px;height:8.5px;background:#f0f0f0;border-top:1.5px solid #fff;border-left:1.5px solid #fff;border-right:1.5px solid #6e6e6e;"></div>
<div style="left:79.5px;top:438.25px;width:284.25px;height:5.5px;background:#f0f0f0;border-right:1.5px solid #c4c4c4;"></div>
<div style="left:363.75px;top:438.25px;width:285.75px;height:5.5px;background:#f0f0f0;border-right:1.5px solid #c4c4c4;"></div>
<div style="left:649.5px;top:438.25px;width:282.25px;height:5.5px;background:#f0f0f0;border-right:1.5px solid #c4c4c4;"></div>
<div style="left:931.75px;top:438.25px;width:287.75px;height:5.5px;background:#f0f0f0;border-right:1.5px solid #c4c4c4;"></div>
<div style="left:1219.5px;top:438.25px;width:282.25px;height:5.5px;background:#f0f0f0;border-right:1.5px solid #c4c4c4;"></div>
<div style="left:1501.75px;top:438.25px;width:304px;height:5.5px;background:#f0f0f0;border-right:1.5px solid #c4c4c4;"></div>
<div style="left:1805.75px;top:438.25px;width:285px;height:5.5px;background:#f0f0f0;border-right:1.5px solid #c4c4c4;"></div>
<div style="left:2090.75px;top:438.25px;width:282.5px;height:5.5px;background:#f0f0f0;border-right:1.5px solid #c4c4c4;"></div>
<div style="left:12.5px;top:443.75px;width:2383px;height:22.5px;background:#f0f0f0;"></div>
<svg style="position:absolute;left:17px;top:449px" width="12" height="14" viewBox="0 0 12 14"><path d="M10 1v12L1.5 7z" fill="#b4b4b4"/></svg>
<svg style="position:absolute;left:2358px;top:449px" width="12" height="14" viewBox="0 0 12 14"><path d="M2 1v12l8.500-6z" fill="#b4b4b4"/></svg>
<div style="left:2374.5px;top:224px;width:21px;height:220px;background:#f0f0f0;"></div>
<div style="left:2384px;top:243.5px;width:2.5px;height:177px;background:#8c8c8c;"></div>
<div style="left:2424.85px;top:199.5px;width:107.05px;height:129.3px;background:#fdfdfd;"></div>
<div style="left:2428.75px;top:203.4px;width:99.95px;height:122.1px;background:linear-gradient(135deg,#8a8a8a,#9c9c9c);"></div>
<div style="left:2430.6px;top:225.7px;width:96px;height:97.4px;background:#ececec;"></div>
<div style="left:2430.6px;top:204.9px;width:96px;height:21.1px;background:linear-gradient(90deg,#e3eaf5,#e7edf7 50%,#ebf0f9);border-radius:6px 6px 0 0;"></div>
<div style="left:2430.6px;top:225.7px;width:96px;height:1.4px;background:#a9adb3;"></div>
<div class="t" style="left:2437.95px;top:206.15px;font-family:'DejaVu Sans','Liberation Sans',sans-serif;font-size:14.3px;line-height:19px;font-weight:700;color:#505050;letter-spacing:0.078px;">Display</div>
<div style="left:2432px;top:228px;width:96px;height:94.5px;background:#f0f0f0;"></div>
<svg style="position:absolute;left:2437px;top:223.7px" width="18" height="18" viewBox="-9 -9 18 18"><circle r="6.5" fill="#fff"/><path d="M-4.68 4.68A6.5 6.5 0 0 1 4.68 -4.68" fill="none" stroke="#707070" stroke-width="1.8"/><path d="M4.68 -4.68A6.5 6.5 0 0 1 -4.68 4.68" fill="none" stroke="#e4e4e4" stroke-width="1.5"/></svg>
<div class="t" style="left:2461.50px;top:225.80px;font-family:'DejaVu Sans','Liberation Sans',sans-serif;font-size:15.6px;line-height:20px;font-weight:400;color:#a8a8a8;text-shadow:1px 1px 0 #fff;">Sensor</div>
<svg style="position:absolute;left:2437px;top:243.7px" width="18" height="18" viewBox="-9 -9 18 18"><circle r="6.5" fill="#fff"/><path d="M-4.68 4.68A6.5 6.5 0 0 1 4.68 -4.68" fill="none" stroke="#707070" stroke-width="1.8"/><path d="M4.68 -4.68A6.5 6.5 0 0 1 -4.68 4.68" fill="none" stroke="#e4e4e4" stroke-width="1.5"/></svg>
<div class="t" style="left:2461.50px;top:245.80px;font-family:'DejaVu Sans','Liberation Sans',sans-serif;font-size:15.6px;line-height:20px;font-weight:400;color:#000;">RGB</div>
<svg style="position:absolute;left:2437px;top:263.7px" width="18" height="18" viewBox="-9 -9 18 18"><circle r="6.5" fill="#fff"/><path d="M-4.68 4.68A6.5 6.5 0 0 1 4.68 -4.68" fill="none" stroke="#707070" stroke-width="1.8"/><path d="M4.68 -4.68A6.5 6.5 0 0 1 -4.68 4.68" fill="none" stroke="#e4e4e4" stroke-width="1.5"/></svg>
<div class="t" style="left:2461.50px;top:265.80px;font-family:'DejaVu Sans','Liberation Sans',sans-serif;font-size:15.6px;line-height:20px;font-weight:400;color:#000;">XYZ</div>
<svg style="position:absolute;left:2437px;top:283.7px" width="18" height="18" viewBox="-9 -9 18 18"><circle r="6.5" fill="#fff"/><path d="M-4.68 4.68A6.5 6.5 0 0 1 4.68 -4.68" fill="none" stroke="#707070" stroke-width="1.8"/><path d="M4.68 -4.68A6.5 6.5 0 0 1 -4.68 4.68" fill="none" stroke="#e4e4e4" stroke-width="1.5"/></svg>
<div class="t" style="left:2461.50px;top:285.80px;font-family:'DejaVu Sans','Liberation Sans',sans-serif;font-size:15.6px;line-height:20px;font-weight:400;color:#000;">xyz</div>
<svg style="position:absolute;left:2437px;top:303px" width="18" height="18" viewBox="-9 -9 18 18"><circle r="6.5" fill="#fff"/><path d="M-4.68 4.68A6.5 6.5 0 0 1 4.68 -4.68" fill="none" stroke="#707070" stroke-width="1.8"/><path d="M4.68 -4.68A6.5 6.5 0 0 1 -4.68 4.68" fill="none" stroke="#e4e4e4" stroke-width="1.5"/><circle r="2.8" fill="#000"/></svg>
<div class="t" style="left:2461.50px;top:305.10px;font-family:'DejaVu Sans','Liberation Sans',sans-serif;font-size:15.6px;line-height:20px;font-weight:400;color:#000;">xyY</div>
<div style="left:2424.5px;top:329.5px;width:106.5px;height:115px;background:#8c8c8c;"></div>
<div style="left:2425px;top:330.5px;width:103.5px;height:37.3px;background:#ebebeb;border-top:2px solid #f8f8f8;border-left:2px solid #f8f8f8;border-bottom:1.5px solid #d8d8d8;"></div>
<div class="t" style="left:2489.40px;top:340.70px;font-family:'DejaVu Sans','Liberation Sans',sans-serif;font-size:15.6px;line-height:20px;font-weight:400;color:#000;letter-spacing:-0.912px;">Go</div>
<div style="left:2425px;top:368.3px;width:103.5px;height:36.1px;background:#ebebeb;border-top:2px solid #f8f8f8;border-left:2px solid #f8f8f8;border-bottom:1.5px solid #d8d8d8;"></div>
<div class="t" style="left:2473.90px;top:377.40px;font-family:'DejaVu Sans','Liberation Sans',sans-serif;font-size:15.6px;line-height:20px;font-weight:400;color:#000;letter-spacing:-0.125px;">Delete</div>
<div style="left:2425px;top:405px;width:103.5px;height:37.3px;background:#ebebeb;border-top:2px solid #f8f8f8;border-left:2px solid #f8f8f8;border-bottom:1.5px solid #d8d8d8;"></div>
<div class="t" style="left:2482.80px;top:414.60px;font-family:'DejaVu Sans','Liberation Sans',sans-serif;font-size:15.6px;line-height:20px;font-weight:400;color:#000;letter-spacing:-0.211px;">Refs</div>
<svg style="position:absolute;left:2428px;top:330.5px;" width="44" height="37" viewBox="2428 330.5 44 37"><circle cx="2439.4" cy="357.8" r="7.3" fill="url(#sR)"/><circle cx="2450" cy="357.8" r="7.6" fill="url(#sB)"/><circle cx="2458.9" cy="353.3" r="7" fill="url(#sG)"/><circle cx="2466.7" cy="352.2" r="5.6" fill="url(#sc)"/><circle cx="2466.4" cy="341.7" r="6" fill="url(#sp)"/><circle cx="2458.7" cy="336.1" r="5.5" fill="url(#sy)"/></svg>
<svg style="position:absolute;left:2432px;top:369px;" width="40" height="36" viewBox="0 0 40 36"><defs><linearGradient id="gbin" x1="0" y1="0" x2="1" y2="1"><stop offset="0" stop-color="#e4fbff"/><stop offset=".5" stop-color="#a8dcf8"/><stop offset="1" stop-color="#4c9ce0"/></linearGradient></defs><path d="M2.500 5q17-5.500 34.500-3.500l-2.500 25q-1 6-12 7.500t-15-2z" fill="url(#gbin)" stroke="#7cb8e8" stroke-width="1"/><path d="M14 3.500q10-3 23-2l-.5 4q-12-.5-22.500-2z" fill="#5ca4e4" opacity=".8"/><ellipse cx="20" cy="28.500" rx="12" ry="4.500" fill="#d8f4ff" opacity=".7"/><path d="M19 16q1-6 8-6.500l-.5-3 5.500 4.500-5 4.500-.3-2.800q-4 .3-4.700 4z" fill="#14a024"/><path d="M31 19q-1 6-8 6.500l.5 3-5.500-4.500 5-4.500.3 2.800q4-.3 4.700-4z" fill="#14a024"/></svg>
<svg style="position:absolute;left:2432.2px;top:409.7px;" width="41" height="29" viewBox="0 9 41 29"><path d="M0 38V24.500l3-3 3-6 2-3.500 2.500 4 2 2.500 2 1.500 2 1.500 2.500-1 2-7 2.500-3 3 2.500 2 2.500 2.500 6 2.500 2.500 2.500-2.500 3 2.500 1.500 1v15z" fill="#ffff00"/><path d="M0 38V25.500l2.800-2.500V38z" fill="#000080"/><path d="M2.800 38V23l3-5V38z" fill="#ff00ff"/><path d="M5.800 38V18l2.500-4.500 2.500 4.500V38z" fill="#0000ff"/><path d="M10.800 38V20.500l3.200 3V38z" fill="#00ffff"/><path d="M14 38V24l5.500-1.500V38z" fill="#00ff00"/><path d="M19.500 38V20l3-6.500 4 3V38z" fill="#ffff00"/><path d="M26.500 38V15l2.500 5 2.500 4V38z" fill="#800000"/><path d="M31.500 38V24.500l3-2 3 2.500 3-.5V38z" fill="#ff0000"/></svg>
<div style="left:2432.8px;top:447.8px;width:69.5px;height:22px;background:#f0f0f0;"></div>
<div style="left:2433.9px;top:450.5px;width:13.5px;height:13.5px;background:#fff;border-top:2px solid #8a8a8a;border-left:2px solid #8a8a8a;border-right:1px solid #e8e8e8;border-bottom:1px solid #e8e8e8;"></div>
<div class="t" style="left:2456.10px;top:447.90px;font-family:'DejaVu Sans','Liberation Sans',sans-serif;font-size:15.6px;line-height:20px;font-weight:400;color:#000;letter-spacing:0.024px;">Edit</div>
<div style="left:2.35px;top:480.1px;width:479.25px;height:883.2px;background:#fdfdfd;"></div>
<div style="left:6.25px;top:484px;width:472.15px;height:876px;background:linear-gradient(135deg,#8a8a8a,#9c9c9c);"></div>
<div style="left:8.1px;top:506.8px;width:468.2px;height:850.8px;background:#ececec;"></div>
<div style="left:8.1px;top:485.5px;width:468.2px;height:21.6px;background:linear-gradient(90deg,#e3eaf5,#e7edf7 50%,#ebf0f9);border-radius:6px 6px 0 0;"></div>
<div style="left:8.1px;top:506.8px;width:468.2px;height:1.4px;background:#a9adb3;"></div>
<div class="t" style="left:15.00px;top:487.15px;font-family:'DejaVu Sans','Liberation Sans',sans-serif;font-size:14.3px;line-height:19px;font-weight:700;color:#505050;letter-spacing:0.079px;">Selected color</div>
<div style="left:18px;top:511.5px;width:142px;height:17.5px;background:#f0f0f0;"></div>
<div class="t" style="left:22.30px;top:511.10px;font-family:'DejaVu Sans','Liberation Sans',sans-serif;font-size:15.6px;line-height:20px;font-weight:400;color:#000;letter-spacing:-0.188px;">RGB Levels</div>
<div style="left:287px;top:511.5px;width:160px;height:15px;background:#f0f0f0;"></div>
<div class="t" style="left:301.70px;top:508.80px;font-family:'DejaVu Sans','Liberation Sans',sans-serif;font-size:15.6px;line-height:20px;font-weight:400;color:#000;letter-spacing:0.119px;">Current Measure</div>
<div style="left:17.3px;top:540.7px;width:250.4px;height:108.5px;background:#f2f2f2;"></div>
<div style="left:17.3px;top:596px;width:250.4px;height:2px;background:repeating-linear-gradient(90deg,#a4a4a4 0 3.6px,transparent 3.6px 7.5px);"></div>
<div style="left:17.3px;top:636px;width:62.7px;height:10px;background:#a00000;border-radius:50% 50% 0 0 / 100% 100% 0 0;border-top:1.5px solid #000;"></div>
<div style="left:84px;top:636px;width:59.5px;height:10px;background:#00a000;border-radius:50% 50% 0 0 / 100% 100% 0 0;border-top:1.5px solid #000;"></div>
<div style="left:148px;top:636px;width:59px;height:10px;background:#0000b0;border-radius:50% 50% 0 0 / 100% 100% 0 0;border-top:1.5px solid #000;"></div>
<div style="left:212px;top:636px;width:55.7px;height:10px;background:#b08000;border-radius:50% 50% 0 0 / 100% 100% 0 0;border-top:1.5px solid #000;"></div>
<div style="left:17.3px;top:643.1px;width:250.4px;height:5.8px;background:#000;"></div>
<div class="t" style="left:31.95px;top:618.27px;font-family:'Liberation Serif',serif;font-size:14.6px;line-height:19px;font-weight:400;color:#000;letter-spacing:0.273px;-webkit-text-stroke:0.35px #000;">0.0%</div>
<div class="t" style="left:95.95px;top:618.27px;font-family:'Liberation Serif',serif;font-size:14.6px;line-height:19px;font-weight:400;color:#000;letter-spacing:0.273px;-webkit-text-stroke:0.35px #000;">0.0%</div>
<div class="t" style="left:159.95px;top:618.27px;font-family:'Liberation Serif',serif;font-size:14.6px;line-height:19px;font-weight:400;color:#000;letter-spacing:0.273px;-webkit-text-stroke:0.35px #000;">0.0%</div>
<div class="t" style="left:219.00px;top:618.27px;font-family:'Liberation Serif',serif;font-size:14.6px;line-height:19px;font-weight:400;color:#000;letter-spacing:0.648px;-webkit-text-stroke:0.35px #000;">dE 0.0</div>
<div style="left:20px;top:666.7px;width:240px;height:91.5px;background:#f0f0f0;"></div>
<div class="t" style="left:44.30px;top:666.66px;font-family:'Liberation Sans',sans-serif;font-size:16px;line-height:21px;font-weight:700;color:#000;letter-spacing:0.725px;">Measure</div>
<div class="t" style="left:159.30px;top:666.66px;font-family:'Liberation Sans',sans-serif;font-size:16px;line-height:21px;font-weight:700;color:#000;letter-spacing:0.403px;">Reference</div>
<div style="left:22px;top:777.7px;width:52.5px;height:17.3px;background:#f0f0f0;"></div>
<div class="t" style="left:22.30px;top:777.20px;font-family:'DejaVu Sans','Liberation Sans',sans-serif;font-size:15.6px;line-height:20px;font-weight:400;color:#000;letter-spacing:0.292px;">Target</div>
<div style="left:62px;top:797.5px;width:146px;height:111.5px;background:#000;"></div>
<div style="left:63px;top:798.5px;width:144px;height:109.5px;overflow:hidden;background:#000"><div style="left:0;top:0;width:109.5px;height:109.5px;transform-origin:0 0;transform:scaleX(1.31507);background:conic-gradient(from 0deg at 50% 50%,rgb(64,255,0) 0deg,rgb(105,245,0) 11deg,rgb(150,230,0) 21deg,rgb(190,220,0) 30deg,rgb(225,205,0) 38deg,rgb(255,192,0) 45deg,rgb(255,100,0) 58deg,rgb(255,50,0) 70deg,rgb(255,0,0) 90deg,rgb(255,0,0) 90deg,rgb(255,0,60) 112deg,rgb(255,0,128) 135deg,rgb(192,0,160) 153deg,rgb(128,0,192) 180deg,rgb(64,0,225) 207deg,rgb(0,0,255) 225deg,rgb(0,16,250) 234deg,rgb(0,40,236) 243deg,rgb(0,74,210) 256deg,rgb(0,112,184) 270deg,rgb(0,140,170) 280deg,rgb(0,170,158) 290deg,rgb(0,215,140) 302deg,rgb(0,255,128) 315deg,rgb(20,255,60) 333deg,rgb(40,255,30) 349deg,rgb(64,255,0) 360deg);"></div></div>
<div style="left:84.3px;top:814.3px;width:101.6px;height:78px;background:#000;border:1px solid #fff;border-radius:9px;"></div>
<svg style="position:absolute;left:63px;top:798.5px" width="144" height="109.5" viewBox="63 798.5 144 109.5" fill="none" stroke="#fff" stroke-width="1.3" stroke-dasharray="3.2 2.6"><path d="M81.5 853.2H190M135.3 814V893"/><ellipse cx="135.3" cy="851.6" rx="26.3" ry="20.1"/></svg>
<div style="left:276px;top:538.3px;width:190px;height:811.4px;background:#f0f0f0;border-top:2px solid #7d7d7d;border-left:2.5px solid #7d7d7d;border-right:1.5px solid #fff;border-bottom:1.5px solid #fff;"></div>
<div style="left:278.3px;top:1229px;width:165px;height:120.5px;background:#a0a0a0;"></div>
<div style="left:278.3px;top:540px;width:65px;height:28.73px;background:#f0f0f0;border-top:1.5px solid #fff;border-left:1.5px solid #fff;border-right:1.5px solid #6e6e6e;border-bottom:2px solid #6e6e6e;"></div>
<div class="t" style="left:284.27px;top:546.04px;font-family:'Liberation Sans',sans-serif;font-size:14.6px;line-height:19px;font-weight:700;color:#000;">Y cd/m²</div>
<div style="left:343.3px;top:540px;width:100px;height:28.73px;background:#fff;border-right:1.5px solid #c4c4c4;border-bottom:1.5px solid #c4c4c4;"></div>
<div style="left:278.3px;top:568.73px;width:65px;height:28.73px;background:#f0f0f0;border-top:1.5px solid #fff;border-left:1.5px solid #fff;border-right:1.5px solid #6e6e6e;border-bottom:2px solid #6e6e6e;"></div>
<div class="t" style="left:294.41px;top:574.77px;font-family:'Liberation Sans',sans-serif;font-size:14.6px;line-height:19px;font-weight:700;color:#000;">Y ftL</div>
<div style="left:343.3px;top:568.73px;width:100px;height:28.73px;background:#fff;border-right:1.5px solid #c4c4c4;border-bottom:1.5px solid #c4c4c4;"></div>
<div style="left:278.3px;top:597.46px;width:65px;height:28.73px;background:#f0f0f0;border-top:1.5px solid #fff;border-left:1.5px solid #fff;border-right:1.5px solid #6e6e6e;border-bottom:2px solid #6e6e6e;"></div>
<div class="t" style="left:303.12px;top:603.50px;font-family:'Liberation Sans',sans-serif;font-size:14.6px;line-height:19px;font-weight:700;color:#000;">T°</div>
<div style="left:343.3px;top:597.46px;width:100px;height:28.73px;background:#fff;border-right:1.5px solid #c4c4c4;border-bottom:1.5px solid #c4c4c4;"></div>
<div style="left:278.3px;top:626.19px;width:65px;height:28.73px;background:#f0f0f0;border-top:1.5px solid #fff;border-left:1.5px solid #fff;border-right:1.5px solid #6e6e6e;border-bottom:2px solid #6e6e6e;"></div>
<div class="t" style="left:305.63px;top:632.23px;font-family:'Liberation Sans',sans-serif;font-size:14.6px;line-height:19px;font-weight:700;color:#000;">X</div>
<div style="left:343.3px;top:626.19px;width:100px;height:28.73px;background:#e0e0e0;border-right:1.5px solid #c4c4c4;border-bottom:1.5px solid #c4c4c4;"></div>
<div style="left:278.3px;top:654.92px;width:65px;height:28.73px;background:#f0f0f0;border-top:1.5px solid #fff;border-left:1.5px solid #fff;border-right:1.5px solid #6e6e6e;border-bottom:2px solid #6e6e6e;"></div>
<div class="t" style="left:305.63px;top:660.96px;font-family:'Liberation Sans',sans-serif;font-size:14.6px;line-height:19px;font-weight:700;color:#000;">Y</div>
<div style="left:343.3px;top:654.92px;width:100px;height:28.73px;background:#e0e0e0;border-right:1.5px solid #c4c4c4;border-bottom:1.5px solid #c4c4c4;"></div>
<div style="left:278.3px;top:683.65px;width:65px;height:28.73px;background:#f0f0f0;border-top:1.5px solid #fff;border-left:1.5px solid #fff;border-right:1.5px solid #6e6e6e;border-bottom:2px solid #6e6e6e;"></div>
<div class="t" style="left:306.04px;top:689.69px;font-family:'Liberation Sans',sans-serif;font-size:14.6px;line-height:19px;font-weight:700;color:#000;">Z</div>
<div style="left:343.3px;top:683.65px;width:100px;height:28.73px;background:#e0e0e0;border-right:1.5px solid #c4c4c4;border-bottom:1.5px solid #c4c4c4;"></div>
<div style="left:278.3px;top:712.38px;width:65px;height:28.73px;background:#f0f0f0;border-top:1.5px solid #fff;border-left:1.5px solid #fff;border-right:1.5px solid #6e6e6e;border-bottom:2px solid #6e6e6e;"></div>
<div class="t" style="left:305.23px;top:718.42px;font-family:'Liberation Sans',sans-serif;font-size:14.6px;line-height:19px;font-weight:700;color:#000;">R</div>
<div style="left:343.3px;top:712.38px;width:100px;height:28.73px;background:#fff;border-right:1.5px solid #c4c4c4;border-bottom:1.5px solid #c4c4c4;"></div>
<div style="left:278.3px;top:741.11px;width:65px;height:28.73px;background:#f0f0f0;border-top:1.5px solid #fff;border-left:1.5px solid #fff;border-right:1.5px solid #6e6e6e;border-bottom:2px solid #6e6e6e;"></div>
<div class="t" style="left:304.82px;top:747.15px;font-family:'Liberation Sans',sans-serif;font-size:14.6px;line-height:19px;font-weight:700;color:#000;">G</div>
<div style="left:343.3px;top:741.11px;width:100px;height:28.73px;background:#fff;border-right:1.5px solid #c4c4c4;border-bottom:1.5px solid #c4c4c4;"></div>
<div style="left:278.3px;top:769.84px;width:65px;height:28.73px;background:#f0f0f0;border-top:1.5px solid #fff;border-left:1.5px solid #fff;border-right:1.5px solid #6e6e6e;border-bottom:2px solid #6e6e6e;"></div>
<div class="t" style="left:305.23px;top:775.88px;font-family:'Liberation Sans',sans-serif;font-size:14.6px;line-height:19px;font-weight:700;color:#000;">B</div>
<div style="left:343.3px;top:769.84px;width:100px;height:28.73px;background:#fff;border-right:1.5px solid #c4c4c4;border-bottom:1.5px solid #c4c4c4;"></div>
<div style="left:278.3px;top:798.57px;width:65px;height:28.73px;background:#f0f0f0;border-top:1.5px solid #fff;border-left:1.5px solid #fff;border-right:1.5px solid #6e6e6e;border-bottom:2px solid #6e6e6e;"></div>
<div class="t" style="left:306.44px;top:804.61px;font-family:'Liberation Sans',sans-serif;font-size:14.6px;line-height:19px;font-weight:700;color:#000;">x</div>
<div style="left:343.3px;top:798.57px;width:100px;height:28.73px;background:#e0e0e0;border-right:1.5px solid #c4c4c4;border-bottom:1.5px solid #c4c4c4;"></div>
<div style="left:278.3px;top:827.3px;width:65px;height:28.73px;background:#f0f0f0;border-top:1.5px solid #fff;border-left:1.5px solid #fff;border-right:1.5px solid #6e6e6e;border-bottom:2px solid #6e6e6e;"></div>
<div class="t" style="left:306.44px;top:833.34px;font-family:'Liberation Sans',sans-serif;font-size:14.6px;line-height:19px;font-weight:700;color:#000;">y</div>
<div style="left:343.3px;top:827.3px;width:100px;height:28.73px;background:#e0e0e0;border-right:1.5px solid #c4c4c4;border-bottom:1.5px solid #c4c4c4;"></div>
<div style="left:278.3px;top:856.03px;width:65px;height:28.73px;background:#f0f0f0;border-top:1.5px solid #fff;border-left:1.5px solid #fff;border-right:1.5px solid #6e6e6e;border-bottom:2px solid #6e6e6e;"></div>
<div class="t" style="left:305.63px;top:862.07px;font-family:'Liberation Sans',sans-serif;font-size:14.6px;line-height:19px;font-weight:700;color:#000;">Y</div>
<div style="left:343.3px;top:856.03px;width:100px;height:28.73px;background:#e0e0e0;border-right:1.5px solid #c4c4c4;border-bottom:1.5px solid #c4c4c4;"></div>
<div style="left:278.3px;top:884.76px;width:65px;height:28.73px;background:#f0f0f0;border-top:1.5px solid #fff;border-left:1.5px solid #fff;border-right:1.5px solid #6e6e6e;border-bottom:2px solid #6e6e6e;"></div>
<div class="t" style="left:306.44px;top:890.80px;font-family:'Liberation Sans',sans-serif;font-size:14.6px;line-height:19px;font-weight:700;color:#000;">x</div>
<div style="left:343.3px;top:884.76px;width:100px;height:28.73px;background:#fff;border-right:1.5px solid #c4c4c4;border-bottom:1.5px solid #c4c4c4;"></div>
<div style="left:278.3px;top:913.49px;width:65px;height:28.73px;background:#f0f0f0;border-top:1.5px solid #fff;border-left:1.5px solid #fff;border-right:1.5px solid #6e6e6e;border-bottom:2px solid #6e6e6e;"></div>
<div class="t" style="left:306.44px;top:919.53px;font-family:'Liberation Sans',sans-serif;font-size:14.6px;line-height:19px;font-weight:700;color:#000;">y</div>
<div style="left:343.3px;top:913.49px;width:100px;height:28.73px;background:#fff;border-right:1.5px solid #c4c4c4;border-bottom:1.5px solid #c4c4c4;"></div>
<div style="left:278.3px;top:942.22px;width:65px;height:28.73px;background:#f0f0f0;border-top:1.5px solid #fff;border-left:1.5px solid #fff;border-right:1.5px solid #6e6e6e;border-bottom:2px solid #6e6e6e;"></div>
<div class="t" style="left:306.85px;top:948.26px;font-family:'Liberation Sans',sans-serif;font-size:14.6px;line-height:19px;font-weight:700;color:#000;">z</div>
<div style="left:343.3px;top:942.22px;width:100px;height:28.73px;background:#fff;border-right:1.5px solid #c4c4c4;border-bottom:1.5px solid #c4c4c4;"></div>
<div style="left:278.3px;top:970.95px;width:65px;height:28.73px;background:#f0f0f0;border-top:1.5px solid #fff;border-left:1.5px solid #fff;border-right:1.5px solid #6e6e6e;border-bottom:2px solid #6e6e6e;"></div>
<div class="t" style="left:306.04px;top:976.99px;font-family:'Liberation Sans',sans-serif;font-size:14.6px;line-height:19px;font-weight:700;color:#000;">L</div>
<div style="left:343.3px;top:970.95px;width:100px;height:28.73px;background:#e0e0e0;border-right:1.5px solid #c4c4c4;border-bottom:1.5px solid #c4c4c4;"></div>
<div style="left:278.3px;top:999.68px;width:65px;height:28.73px;background:#f0f0f0;border-top:1.5px solid #fff;border-left:1.5px solid #fff;border-right:1.5px solid #6e6e6e;border-bottom:2px solid #6e6e6e;"></div>
<div class="t" style="left:306.44px;top:1005.72px;font-family:'Liberation Sans',sans-serif;font-size:14.6px;line-height:19px;font-weight:700;color:#000;">a</div>
<div style="left:343.3px;top:999.68px;width:100px;height:28.73px;background:#e0e0e0;border-right:1.5px solid #c4c4c4;border-bottom:1.5px solid #c4c4c4;"></div>
<div style="left:278.3px;top:1028.41px;width:65px;height:28.73px;background:#f0f0f0;border-top:1.5px solid #fff;border-left:1.5px solid #fff;border-right:1.5px solid #6e6e6e;border-bottom:2px solid #6e6e6e;"></div>
<div class="t" style="left:306.04px;top:1034.45px;font-family:'Liberation Sans',sans-serif;font-size:14.6px;line-height:19px;font-weight:700;color:#000;">b</div>
<div style="left:343.3px;top:1028.41px;width:100px;height:28.73px;background:#e0e0e0;border-right:1.5px solid #c4c4c4;border-bottom:1.5px solid #c4c4c4;"></div>
<div style="left:278.3px;top:1057.14px;width:65px;height:28.73px;background:#f0f0f0;border-top:1.5px solid #fff;border-left:1.5px solid #fff;border-right:1.5px solid #6e6e6e;border-bottom:2px solid #6e6e6e;"></div>
<div class="t" style="left:306.04px;top:1063.18px;font-family:'Liberation Sans',sans-serif;font-size:14.6px;line-height:19px;font-weight:700;color:#000;">L</div>
<div style="left:343.3px;top:1057.14px;width:100px;height:28.73px;background:#fff;border-right:1.5px solid #c4c4c4;border-bottom:1.5px solid #c4c4c4;"></div>
<div style="left:278.3px;top:1085.87px;width:65px;height:28.73px;background:#f0f0f0;border-top:1.5px solid #fff;border-left:1.5px solid #fff;border-right:1.5px solid #6e6e6e;border-bottom:2px solid #6e6e6e;"></div>
<div class="t" style="left:305.23px;top:1091.91px;font-family:'Liberation Sans',sans-serif;font-size:14.6px;line-height:19px;font-weight:700;color:#000;">C</div>
<div style="left:343.3px;top:1085.87px;width:100px;height:28.73px;background:#fff;border-right:1.5px solid #c4c4c4;border-bottom:1.5px solid #c4c4c4;"></div>
<div style="left:278.3px;top:1114.6px;width:65px;height:28.73px;background:#f0f0f0;border-top:1.5px solid #fff;border-left:1.5px solid #fff;border-right:1.5px solid #6e6e6e;border-bottom:2px solid #6e6e6e;"></div>
<div class="t" style="left:305.23px;top:1120.64px;font-family:'Liberation Sans',sans-serif;font-size:14.6px;line-height:19px;font-weight:700;color:#000;">H</div>
<div style="left:343.3px;top:1114.6px;width:100px;height:28.73px;background:#fff;border-right:1.5px solid #c4c4c4;border-bottom:1.5px solid #c4c4c4;"></div>
<div style="left:278.3px;top:1143.33px;width:65px;height:28.73px;background:#f0f0f0;border-top:1.5px solid #fff;border-left:1.5px solid #fff;border-right:1.5px solid #6e6e6e;border-bottom:2px solid #6e6e6e;"></div>
<div class="t" style="left:306.04px;top:1149.37px;font-family:'Liberation Sans',sans-serif;font-size:14.6px;line-height:19px;font-weight:700;color:#000;">L</div>
<div style="left:343.3px;top:1143.33px;width:100px;height:28.73px;background:#e0e0e0;border-right:1.5px solid #c4c4c4;border-bottom:1.5px solid #c4c4c4;"></div>
<div style="left:278.3px;top:1172.06px;width:65px;height:28.73px;background:#f0f0f0;border-top:1.5px solid #fff;border-left:1.5px solid #fff;border-right:1.5px solid #6e6e6e;border-bottom:2px solid #6e6e6e;"></div>
<div class="t" style="left:304.41px;top:1178.10px;font-family:'Liberation Sans',sans-serif;font-size:14.6px;line-height:19px;font-weight:700;color:#000;">M</div>
<div style="left:343.3px;top:1172.06px;width:100px;height:28.73px;background:#e0e0e0;border-right:1.5px solid #c4c4c4;border-bottom:1.5px solid #c4c4c4;"></div>
<div style="left:278.3px;top:1200.79px;width:65px;height:28.73px;background:#f0f0f0;border-top:1.5px solid #fff;border-left:1.5px solid #fff;border-right:1.5px solid #6e6e6e;border-bottom:2px solid #6e6e6e;"></div>
<div class="t" style="left:305.63px;top:1206.83px;font-family:'Liberation Sans',sans-serif;font-size:14.6px;line-height:19px;font-weight:700;color:#000;">S</div>
<div style="left:343.3px;top:1200.79px;width:100px;height:28.73px;background:#e0e0e0;border-right:1.5px solid #c4c4c4;border-bottom:1.5px solid #c4c4c4;"></div>
<div style="left:453.8px;top:561.7px;width:2.5px;height:498px;background:#8c8c8c;"></div>
<div style="left:484.85px;top:480.1px;width:2048.35px;height:883.2px;background:#fdfdfd;"></div>
<div style="left:488.75px;top:484px;width:2041.25px;height:876px;background:linear-gradient(135deg,#8a8a8a,#9c9c9c);"></div>
<div style="left:490.6px;top:506.8px;width:2037.3px;height:850.8px;background:#ececec;"></div>
<div style="left:490.6px;top:485.5px;width:2037.3px;height:21.6px;background:linear-gradient(90deg,#e3eaf5,#e7edf7 50%,#ebf0f9);border-radius:6px 6px 0 0;"></div>
<div style="left:490.6px;top:506.8px;width:2037.3px;height:1.4px;background:#a9adb3;"></div>
<div class="t" style="left:498.00px;top:487.15px;font-family:'DejaVu Sans','Liberation Sans',sans-serif;font-size:14.3px;line-height:19px;font-weight:700;color:#505050;letter-spacing:0.148px;">Information</div>
<div style="left:495.5px;top:511px;width:377px;height:28px;background:#fff;border-top:4px solid #787878;border-left:4px solid #787878;border-bottom:2px solid #e4e4e4;border-right:2px solid #e4e4e4;"></div>
<div style="left:500px;top:516px;width:349px;height:20.5px;background:#0078d7;"></div>
<div class="t" style="left:502.00px;top:516.36px;font-family:'DejaVu Sans','Liberation Sans',sans-serif;font-size:16px;line-height:21px;font-weight:400;color:#fff;letter-spacing:0.212px;">Target - CIE</div>
<div style="left:849.5px;top:515px;width:21px;height:22px;background:#f0f0f0;border:1.5px solid #fff;border-right-color:#707070;border-bottom-color:#707070;box-shadow:1px 1px 0 #a0a0a0;"></div>
<svg style="position:absolute;left:854px;top:522px" width="12" height="8" viewBox="0 0 12 8"><path d="M1 1h10L6 7z" fill="#000"/></svg>
<div style="left:497px;top:549px;width:1015px;height:803px;background:#000;"></div>
<div style="left:1510.8px;top:550px;width:1.5px;height:802px;background:#3a3a3a;"></div>
<div style="left:498px;top:550px;width:1013px;height:801.5px;overflow:hidden;background:#000"><div style="left:0;top:0;width:801.5px;height:801.5px;transform-origin:0 0;transform:scaleX(1.26388);background:conic-gradient(from 0deg at 50% 50%,rgb(64,255,0) 0deg,rgb(105,245,0) 11deg,rgb(150,230,0) 21deg,rgb(190,220,0) 30deg,rgb(225,205,0) 38deg,rgb(255,192,0) 45deg,rgb(255,100,0) 58deg,rgb(255,50,0) 70deg,rgb(255,0,0) 90deg,rgb(255,0,0) 90deg,rgb(255,0,60) 112deg,rgb(255,0,128) 135deg,rgb(192,0,160) 153deg,rgb(128,0,192) 180deg,rgb(64,0,225) 207deg,rgb(0,0,255) 225deg,rgb(0,16,250) 234deg,rgb(0,40,236) 243deg,rgb(0,74,210) 256deg,rgb(0,112,184) 270deg,rgb(0,140,170) 280deg,rgb(0,170,158) 290deg,rgb(0,215,140) 302deg,rgb(0,255,128) 315deg,rgb(20,255,60) 333deg,rgb(40,255,30) 349deg,rgb(64,255,0) 360deg);"></div></div>
<div style="left:649px;top:669.3px;width:711.5px;height:562.2px;background:#000;border:1.5px solid #fff;border-radius:11px;"></div>
<svg style="position:absolute;left:498px;top:550px" width="1013" height="801.5" viewBox="498 550 1013 801.5" fill="none" stroke="#fff" stroke-width="1.25" stroke-dasharray="3.6 3.6"><path d="M600.8 950H1410.6M1005.5 632.5V1269.8"/><ellipse cx="1005.5" cy="950" rx="201.3" ry="159.3"/></svg>
<div style="left:0px;top:1362px;width:2560px;height:31px;background:#f0f0f0;"></div>
<div style="left:2px;top:1362.3px;width:2533px;height:2px;background:#9c9c9c;"></div>
<div style="left:2px;top:1364.3px;width:2533px;height:2.2px;background:#c6c6c6;"></div>
<div style="left:0px;top:113px;width:2px;height:1280px;background:#858585;"></div>
<div style="left:24px;top:1377.3px;width:2437px;height:2.5px;background:#8c8c8c;"></div>
<div style="left:2535.5px;top:117px;width:24.5px;height:1276px;background:#f0f0f0;"></div>
<div style="left:2546.3px;top:136px;width:2.5px;height:1174px;background:#8c8c8c;"></div>
<div style="left:0px;top:1392.2px;width:2560px;height:1.6px;background:#1a1a1a;"></div>
<div style="left:0px;top:1393.8px;width:2560px;height:22.5px;background:#f0f0f0;"></div>
<div style="left:0.5px;top:1394.5px;width:66px;height:21px;background:#fff;border:1.5px solid #000;border-right-width:2.5px;border-bottom-width:2.5px;"></div>
<div style="left:21.5px;top:1395.5px;width:1.5px;height:18px;background:#9a9a9a;"></div>
<div style="left:43px;top:1395.5px;width:1.5px;height:18px;background:#9a9a9a;"></div>
<svg style="position:absolute;left:0;top:1393px" width="70" height="24" viewBox="0 1393 70 24"><path d="M7.5 1400l9 9M16.500 1400l-9 9" stroke="#000" stroke-width="1.6" fill="none"/><path d="M36 1400.5v8l-5-4z" fill="#000"/><path d="M51.500 1400.5v8l5-4z" fill="#000"/></svg>
<svg style="position:absolute;left:60px;top:1392px" width="400" height="25" viewBox="60 1392 400 25"><path d="M155.500 1408L158 1415.500H235L237.500 1408M233.750 1393.500L243.750 1415.500H300L302.500 1408M298.750 1393.500L308.750 1415.500H430L440.500 1393.500" fill="none" stroke="#303030" stroke-width="1.3"/><path d="M69 1393.500L79 1415.500H150L160 1393.500z" fill="#fff"/><path d="M69 1393.500L79 1415.500H150L160 1393.500" fill="none" stroke="#000" stroke-width="1.4"/></svg>
<div class="t" style="left:83.30px;top:1395.70px;font-family:'Liberation Sans',sans-serif;font-size:13px;line-height:17px;font-weight:700;color:#000;letter-spacing:0.189px;">Measures</div>
<div class="t" style="left:167.40px;top:1397.11px;font-family:'Liberation Sans',sans-serif;font-size:11.8px;line-height:15px;font-weight:400;color:#000;letter-spacing:-0.191px;">Luminance</div>
<div class="t" style="left:250.00px;top:1397.11px;font-family:'Liberation Sans',sans-serif;font-size:11.8px;line-height:15px;font-weight:400;color:#000;letter-spacing:-0.271px;">Gamma</div>
<div class="t" style="left:322.20px;top:1397.11px;font-family:'Liberation Sans',sans-serif;font-size:11.8px;line-height:15px;font-weight:400;color:#000;letter-spacing:-0.134px;">Color temperature</div>
<svg style="position:absolute;left:2348px;top:1395px" width="19" height="18" viewBox="0 0 19 18"><path d="M1 1h16v9l-1 2v4l-3 2-3-3-2 3-4-1-1-4-2-3z" fill="#8a8600" stroke="#000" stroke-width="1"/><path d="M4 5h9v5H8l-2-2z" fill="#f03030"/><path d="M3 5c3-2 6-2 8 0" stroke="#fff" fill="none" stroke-width="1.2"/><rect x="11" y="11" width="6" height="4" fill="#ffea00"/></svg>
<div style="left:2467.8px;top:1395.6px;width:14.5px;height:14.5px;background:#fff;border-top:2px solid #8a8a8a;border-left:2px solid #8a8a8a;border-right:1px solid #e8e8e8;border-bottom:1px solid #e8e8e8;"></div>
<div class="t" style="left:2490.60px;top:1394.55px;font-family:'Liberation Sans',sans-serif;font-size:14px;line-height:18px;font-weight:400;color:#000;letter-spacing:-0.288px;">Reference</div>
<div style="left:0px;top:1416.3px;width:2560px;height:23.7px;background:linear-gradient(90deg,#e6edf7,#e3eaf5 50%,#e9eff8);"></div>
<div class="t" style="left:2.80px;top:1420.07px;font-family:'Liberation Sans',sans-serif;font-size:14.8px;line-height:19px;font-weight:400;color:#1a1a1a;letter-spacing:-0.636px;">Ready</div>
<div style="left:2338px;top:1418px;width:93px;height:22px;border-top:1.5px solid #a9c2de;border-left:1.5px solid #a9c2de;border-right:1.5px solid #f8fbff;"></div>
<div style="left:2435.2px;top:1418px;width:34.6px;height:22px;border-top:1.5px solid #a9c2de;border-left:1.5px solid #a9c2de;border-right:1.5px solid #f8fbff;"></div>
<div style="left:2474px;top:1418px;width:40.8px;height:22px;border-top:1.5px solid #a9c2de;border-left:1.5px solid #a9c2de;border-right:1.5px solid #f8fbff;"></div>
<div style="left:2519px;top:1418px;width:39px;height:22px;border-top:1.5px solid #a9c2de;border-left:1.5px solid #a9c2de;border-right:1.5px solid #f8fbff;"></div>
<div class="t" style="left:2438.00px;top:1418.99px;font-family:'Liberation Sans',sans-serif;font-size:15.6px;line-height:20px;font-weight:400;color:#1a1a1a;letter-spacing:-1.693px;">CAP</div>
<div class="t" style="left:2477.00px;top:1418.99px;font-family:'Liberation Sans',sans-serif;font-size:15.6px;line-height:20px;font-weight:400;color:#1a1a1a;letter-spacing:-0.639px;">NUM</div>
<div style="left:0px;top:1438.3px;width:2560px;height:1.7px;background:#2a2a2a;"></div>
<div style="left:1512.4px;top:549.6px;width:1013.4px;height:800.4px;background:#02080a;border-top:4px solid #909090;border-left:5.1px solid #949494;border-right:3.8px solid #fafafa;border-bottom:3.8px solid #fafafa;"></div>
<div style="left:1514px;top:551.2px;width:1008px;height:2.4px;background:#9c9c9c;"></div>
<div style="left:1514.2px;top:551.2px;width:3.3px;height:795px;background:#a2a2a2;"></div>
<div id="cie" style="left:1517.5px;top:553.5px;width:1004.5px;height:792.0999999999999px;background:#02080a;overflow:hidden"><div style="left:0;top:0;width:1004.5px;height:792.0999999999999px;clip-path:polygon(261.7px 740.0px,251.3px 734.8px,240.8px 725.5px,228.3px 709.8px,213.8px 686.9px,197.1px 657.8px,180.4px 626.5px,163.8px 593.2px,149.2px 559.8px,136.7px 526.5px,132.5px 512.3px,120.0px 474.8px,109.6px 437.3px,99.2px 391.5px,92.9px 349.8px,88.8px 308.2px,87.7px 266.5px,87.7px 215.7px,89.8px 194.8px,92.9px 174.0px,97.1px 153.2px,103.3px 134.4px,110.6px 120.9px,124.2px 107.3px,140.8px 96.9px,157.5px 90.7px,174.2px 86.9px,190.8px 86.9px,207.5px 89.0px,224.2px 92.8px,253.3px 105.3px,286.7px 119.8px,306.7px 130.3px,355.4px 158.4px,417.9px 198.4px,512.5px 263.6px,529.2px 276.9px,641.7px 356.1px,754.2px 435.3px,866.7px 515.5px,890.6px 533.5px,754.2px 578.6px,641.7px 616.1px,512.5px 658.3px,420.0px 686.9px,307.5px 725.5px,274.2px 736.9px);background:radial-gradient(ellipse 290px 215px at 443.3px 494.9px, rgba(199,199,199,.9) 0%, rgba(199,199,199,.8) 12%, rgba(199,199,199,.6) 25%,rgba(199,199,199,.36) 42%, rgba(199,199,199,.16) 62%, rgba(199,199,199,.05) 82%, rgba(199,199,199,0) 100%),conic-gradient(from 0deg at 433.3px 491.9px,rgb(60,199,0) 0deg,rgb(83,199,0) 4deg,rgb(101,199,0) 8deg,rgb(115,199,0) 12deg,rgb(129,199,0) 16deg,rgb(141,199,0) 20deg,rgb(152,199,0) 24deg,rgb(164,199,0) 28deg,rgb(175,199,0) 32deg,rgb(186,199,0) 36deg,rgb(198,199,0) 40deg,rgb(199,189,0) 44deg,rgb(199,178,0) 48deg,rgb(199,167,0) 52deg,rgb(199,157,0) 56deg,rgb(199,146,0) 60deg,rgb(199,136,0) 64deg,rgb(199,125,0) 68deg,rgb(199,113,0) 72deg,rgb(199,101,0) 76deg,rgb(199,86,0) 80deg,rgb(199,68,0) 84deg,rgb(199,41,0) 88deg,rgb(199,0,42) 92deg,rgb(199,0,67) 96deg,rgb(199,0,82) 100deg,rgb(199,0,94) 104deg,rgb(199,0,103) 108deg,rgb(199,0,111) 112deg,rgb(199,0,118) 116deg,rgb(199,0,124) 120deg,rgb(199,0,130) 124deg,rgb(199,0,136) 128deg,rgb(199,0,141) 132deg,rgb(199,0,146) 136deg,rgb(199,0,151) 140deg,rgb(199,0,156) 144deg,rgb(199,0,160) 148deg,rgb(199,0,165) 152deg,rgb(199,0,170) 156deg,rgb(199,0,175) 160deg,rgb(199,0,180) 164deg,rgb(199,0,186) 168deg,rgb(199,0,192) 172deg,rgb(199,0,199) 176deg,rgb(192,0,199) 180deg,rgb(185,0,199) 184deg,rgb(177,0,199) 188deg,rgb(169,0,199) 192deg,rgb(160,0,199) 196deg,rgb(149,0,199) 200deg,rgb(137,0,199) 204deg,rgb(123,0,199) 208deg,rgb(105,0,199) 212deg,rgb(80,0,199) 216deg,rgb(28,0,199) 220deg,rgb(0,73,199) 224deg,rgb(0,100,199) 228deg,rgb(0,118,199) 232deg,rgb(0,132,199) 236deg,rgb(0,144,199) 240deg,rgb(0,154,199) 244deg,rgb(0,162,199) 248deg,rgb(0,170,199) 252deg,rgb(0,177,199) 256deg,rgb(0,184,199) 260deg,rgb(0,190,199) 264deg,rgb(0,196,199) 268deg,rgb(0,199,196) 272deg,rgb(0,199,191) 276deg,rgb(0,199,185) 280deg,rgb(0,199,181) 284deg,rgb(0,199,176) 288deg,rgb(0,199,172) 292deg,rgb(0,199,167) 296deg,rgb(0,199,163) 300deg,rgb(0,199,158) 304deg,rgb(0,199,154) 308deg,rgb(0,199,149) 312deg,rgb(0,199,144) 316deg,rgb(0,199,139) 320deg,rgb(0,199,134) 324deg,rgb(0,199,128) 328deg,rgb(0,199,121) 332deg,rgb(0,199,114) 336deg,rgb(0,199,105) 340deg,rgb(0,199,94) 344deg,rgb(0,199,81) 348deg,rgb(0,199,61) 352deg,rgb(0,199,18) 356deg,rgb(60,199,0) 360deg);"></div>
<svg style="position:absolute;left:0;top:0" width="1004.5" height="792.0999999999999" viewBox="1517.5 553.5 1004.5 792.0999999999999"><path d="M1601.7 553.5V1345.6M1713.3 553.5V1345.6M1825.0 553.5V1345.6M1936.6 553.5V1345.6M2048.2 553.5V1345.6M2159.8 553.5V1345.6M2271.5 553.5V1345.6M2383.1 553.5V1345.6M1517.5 1226.9H2522.0M1517.5 1147.6H2522.0M1517.5 1068.4H2522.0M1517.5 989.2H2522.0M1517.5 909.9H2522.0M1517.5 830.7H2522.0M1517.5 751.5H2522.0M1517.5 672.3H2522.0M1517.5 593.0H2522.0" stroke="#444" stroke-width="1.7" fill="none" opacity=".9"/><polygon points="1779.2,1293.5 1768.8,1288.3 1758.3,1279.0 1745.8,1263.3 1731.3,1240.4 1714.6,1211.3 1697.9,1180.0 1681.3,1146.7 1666.7,1113.3 1654.2,1080.0 1650.0,1065.8 1637.5,1028.3 1627.1,990.8 1616.7,945.0 1610.4,903.3 1606.3,861.7 1605.2,820.0 1605.2,769.2 1607.3,748.3 1610.4,727.5 1614.6,706.7 1620.8,687.9 1628.1,674.4 1641.7,660.8 1658.3,650.4 1675.0,644.2 1691.7,640.4 1708.3,640.4 1725.0,642.5 1741.7,646.3 1770.8,658.8 1804.2,673.3 1824.2,683.8 1872.9,711.9 1935.4,751.9 2030.0,817.1 2046.7,830.4 2159.2,909.6 2271.7,988.8 2384.2,1069.0 2408.1,1087.0 2271.7,1132.1 2159.2,1169.6 2030.0,1211.8 1937.5,1240.4 1825.0,1279.0 1791.7,1290.4" fill="none" stroke="#e89c00" stroke-width="1.6" stroke-linejoin="round"/></svg>
<div style="left:0;top:0;width:1004.5px;height:792.0999999999999px;clip-path:polygon(798.6px 491.1px,419.1px 277.2px,251.6px 705.1px);background:radial-gradient(ellipse 370px 275px at 449.3px 494.9px, rgba(255,255,255,1) 0%, rgba(255,255,255,.95) 9%, rgba(255,255,255,.80) 20%,rgba(255,255,255,.56) 36%, rgba(255,255,255,.30) 56%, rgba(255,255,255,.12) 76%, rgba(255,255,255,0) 100%),conic-gradient(from 0deg at 433.3px 491.9px,rgb(77,255,0) 0deg,rgb(107,255,0) 4deg,rgb(129,255,0) 8deg,rgb(148,255,0) 12deg,rgb(165,255,0) 16deg,rgb(180,255,0) 20deg,rgb(195,255,0) 24deg,rgb(210,255,0) 28deg,rgb(224,255,0) 32deg,rgb(238,255,0) 36deg,rgb(253,255,0) 40deg,rgb(255,242,0) 44deg,rgb(255,228,0) 48deg,rgb(255,214,0) 52deg,rgb(255,201,0) 56deg,rgb(255,188,0) 60deg,rgb(255,174,0) 64deg,rgb(255,160,0) 68deg,rgb(255,145,0) 72deg,rgb(255,129,0) 76deg,rgb(255,110,0) 80deg,rgb(255,87,0) 84deg,rgb(255,52,0) 88deg,rgb(255,0,54) 92deg,rgb(255,0,85) 96deg,rgb(255,0,105) 100deg,rgb(255,0,120) 104deg,rgb(255,0,132) 108deg,rgb(255,0,142) 112deg,rgb(255,0,151) 116deg,rgb(255,0,160) 120deg,rgb(255,0,167) 124deg,rgb(255,0,174) 128deg,rgb(255,0,181) 132deg,rgb(255,0,187) 136deg,rgb(255,0,193) 140deg,rgb(255,0,199) 144deg,rgb(255,0,206) 148deg,rgb(255,0,212) 152deg,rgb(255,0,218) 156deg,rgb(255,0,225) 160deg,rgb(255,0,231) 164deg,rgb(255,0,239) 168deg,rgb(255,0,246) 172deg,rgb(255,0,255) 176deg,rgb(246,0,255) 180deg,rgb(237,0,255) 184deg,rgb(227,0,255) 188deg,rgb(216,0,255) 192deg,rgb(205,0,255) 196deg,rgb(191,0,255) 200deg,rgb(176,0,255) 204deg,rgb(158,0,255) 208deg,rgb(135,0,255) 212deg,rgb(103,0,255) 216deg,rgb(36,0,255) 220deg,rgb(0,94,255) 224deg,rgb(0,128,255) 228deg,rgb(0,152,255) 232deg,rgb(0,170,255) 236deg,rgb(0,184,255) 240deg,rgb(0,197,255) 244deg,rgb(0,208,255) 248deg,rgb(0,218,255) 252deg,rgb(0,227,255) 256deg,rgb(0,236,255) 260deg,rgb(0,244,255) 264deg,rgb(0,251,255) 268deg,rgb(0,255,251) 272deg,rgb(0,255,244) 276deg,rgb(0,255,238) 280deg,rgb(0,255,232) 284deg,rgb(0,255,226) 288deg,rgb(0,255,220) 292deg,rgb(0,255,214) 296deg,rgb(0,255,209) 300deg,rgb(0,255,203) 304deg,rgb(0,255,197) 308deg,rgb(0,255,191) 312deg,rgb(0,255,185) 316deg,rgb(0,255,179) 320deg,rgb(0,255,171) 324deg,rgb(0,255,164) 328deg,rgb(0,255,155) 332deg,rgb(0,255,146) 336deg,rgb(0,255,135) 340deg,rgb(0,255,121) 344deg,rgb(0,255,104) 348deg,rgb(0,255,79) 352deg,rgb(0,255,22) 356deg,rgb(77,255,0) 360deg);"></div>
<svg style="position:absolute;left:0;top:0" width="1004.5" height="792.0999999999999" viewBox="1517.5 553.5 1004.5 792.0999999999999">
<defs><filter id="bl" x="-50%" y="-50%" width="200%" height="200%"><feGaussianBlur stdDeviation="1.2"/></filter><radialGradient id="mg" cx=".42" cy=".38" r=".62"><stop offset="0" stop-color="#20f020"/><stop offset=".55" stop-color="#00d000"/><stop offset="1" stop-color="#007800"/></radialGradient><radialGradient id="mr" cx=".42" cy=".38" r=".62"><stop offset="0" stop-color="#ff3030"/><stop offset=".55" stop-color="#e81818"/><stop offset="1" stop-color="#901010"/></radialGradient><radialGradient id="mb" cx=".42" cy=".38" r=".62"><stop offset="0" stop-color="#4040ff"/><stop offset=".55" stop-color="#2020e8"/><stop offset="1" stop-color="#101090"/></radialGradient><radialGradient id="my" cx=".42" cy=".38" r=".62"><stop offset="0" stop-color="#ffffa0"/><stop offset=".55" stop-color="#e8e870"/><stop offset="1" stop-color="#8a8a30"/></radialGradient><radialGradient id="mc" cx=".42" cy=".38" r=".62"><stop offset="0" stop-color="#a8f8ff"/><stop offset=".55" stop-color="#70e0e8"/><stop offset="1" stop-color="#308890"/></radialGradient><radialGradient id="mm" cx=".42" cy=".38" r=".62"><stop offset="0" stop-color="#ff40ff"/><stop offset=".55" stop-color="#e818e0"/><stop offset="1" stop-color="#801080"/></radialGradient><radialGradient id="mw" cx=".42" cy=".38" r=".62"><stop offset="0" stop-color="#ffffff"/><stop offset=".55" stop-color="#ffffff"/><stop offset="1" stop-color="#b0b0b0"/></radialGradient><radialGradient id="mk" cx=".42" cy=".38" r=".62"><stop offset="0" stop-color="#ffffff"/><stop offset=".55" stop-color="#404040"/><stop offset="1" stop-color="#000000"/></radialGradient></defs>
<path d="M1523.3 1045.500H2517M1950.700 559.8V1329" stroke="#d8d8d8" stroke-width="1.3" stroke-dasharray="5.200 4.400" fill="none" opacity=".85"/>
<path d="M1936.6 830.7L2003.2 868.2" stroke="#008000" stroke-width="3.6" fill="none" stroke-linecap="round"/>
<path d="M2003.2 868.2L2069.8 905.8" stroke="#808000" stroke-width="3.6" fill="none" stroke-linecap="round"/>
<path d="M2069.8 905.8L2192.9 975.2" stroke="#808000" stroke-width="3.6" fill="none" stroke-linecap="round"/>
<path d="M2192.9 975.2L2316.1 1044.6" stroke="#800000" stroke-width="3.6" fill="none" stroke-linecap="round"/>
<path d="M2316.1 1044.6L2138.0 1114.3" stroke="#800000" stroke-width="3.6" fill="none" stroke-linecap="round"/>
<path d="M2138.0 1114.3L1959.9 1183.9" stroke="#800080" stroke-width="3.6" fill="none" stroke-linecap="round"/>
<path d="M1959.9 1183.9L1864.5 1221.2" stroke="#800080" stroke-width="3.6" fill="none" stroke-linecap="round"/>
<path d="M1864.5 1221.2L1769.1 1258.6" stroke="#000080" stroke-width="3.6" fill="none" stroke-linecap="round"/>
<path d="M1769.1 1258.6L1810.8 1152.1" stroke="#000080" stroke-width="3.6" fill="none" stroke-linecap="round"/>
<path d="M1810.8 1152.1L1852.4 1045.7" stroke="#008080" stroke-width="3.6" fill="none" stroke-linecap="round"/>
<path d="M1852.4 1045.7L1894.5 938.2" stroke="#008080" stroke-width="3.6" fill="none" stroke-linecap="round"/>
<path d="M1894.5 938.2L1936.6 830.7" stroke="#008000" stroke-width="3.6" fill="none" stroke-linecap="round"/>
<polygon points="2317.6,1043.5 1935.0,824.1 1776.4,1258.6" fill="none" stroke="#fff" stroke-width="4.2" stroke-linejoin="miter"/>
<path d="M1950.700 1042L1949 984L1945 932L1940 878L1934.500 826" stroke="#3a3e44" stroke-width="1.4" stroke-dasharray="5.500 7.500" fill="none" opacity=".85"/>
<path d="M1960 1038L2050 1039L2146 1041.500L2235 1044.500L2316 1045" stroke="#3a3e44" stroke-width="1.4" stroke-dasharray="5.500 7.500" fill="none" opacity=".85"/>
<path d="M1952 1050L1906 1094L1863.500 1147L1815.600 1204.600L1775 1259" stroke="#3a3e44" stroke-width="1.4" stroke-dasharray="5.500 7.500" fill="none" opacity=".85"/>
<path d="M1958 1036L1989 1002L2018 969.700L2046 936.300L2070 904" stroke="#3a3e44" stroke-width="1.4" stroke-dasharray="5.500 7.500" fill="none" opacity=".85"/>
<path d="M1945 1040L1930 1035.600L1905 1034.700L1881 1033.800L1855 1033" stroke="#3a3e44" stroke-width="1.4" stroke-dasharray="5.500 7.500" fill="none" opacity=".85"/>
<path d="M1952 1052L1957.300 1074.200L1961.500 1110L1963.500 1146.700L1972.500 1180" stroke="#3a3e44" stroke-width="1.4" stroke-dasharray="5.500 7.500" fill="none" opacity=".85"/>
<path d="M1878 1114Q1900 1090 1921 1072.500T1956 1046T1974 1032.500Q2000 1016 2027.400 1003.600Q2060 988 2090 981Q2105 978 2126 975.500" stroke="#101010" stroke-width="1.7" fill="none"/>
<circle cx="1921.2" cy="1072.5" r="3.3" fill="#fff" stroke="#202020" stroke-width="1.6"/>
<circle cx="1973.8" cy="1032.5" r="3.4" fill="#fff" stroke="#202020" stroke-width="1.6"/>
<circle cx="2027.4" cy="1003.6" r="3.4" fill="#fff" stroke="#202020" stroke-width="1.6"/>
<circle cx="2090" cy="981" r="3.4" fill="#fff" stroke="#202020" stroke-width="1.6"/>
<circle cx="2116.5" cy="976.3" r="3.4" fill="#fff" stroke="#202020" stroke-width="1.6"/>
<circle cx="1990" cy="1027.4" r="3.500" fill="#10d810" stroke="#087808" stroke-width="1"/>
<circle cx="2098.8" cy="983.6" r="3.500" fill="#10d810" stroke="#087808" stroke-width="1"/>
<circle cx="1948" cy="1057.5" r="3.500" fill="#10d810" stroke="#087808" stroke-width="1"/>
<text x="1885.0" y="1064.2" font-family="'Liberation Serif',serif" font-size="16.6" font-weight="400" fill="#3c3020" text-anchor="start" textLength="33.4" lengthAdjust="spacingAndGlyphs">9300</text>
<text x="1937.0" y="1024.6" font-family="'Liberation Serif',serif" font-size="16.6" font-weight="400" fill="#3c3020" text-anchor="start" textLength="33.4" lengthAdjust="spacingAndGlyphs">5500</text>
<text x="1990.9" y="995.8" font-family="'Liberation Serif',serif" font-size="16.6" font-weight="400" fill="#3c3020" text-anchor="start" textLength="33.4" lengthAdjust="spacingAndGlyphs">4000</text>
<text x="2058.4" y="973.2" font-family="'Liberation Serif',serif" font-size="16.6" font-weight="400" fill="#3c3020" text-anchor="start" textLength="33.8" lengthAdjust="spacingAndGlyphs">3000</text>
<text x="2114.4" y="968.3" font-family="'Liberation Serif',serif" font-size="16.6" font-weight="400" fill="#3c3020" text-anchor="start" textLength="34.4" lengthAdjust="spacingAndGlyphs">2700</text>
<text x="2097.7" y="1003.3" font-family="'Liberation Serif',serif" font-size="16" font-weight="400" fill="#3c3020" text-anchor="start">A</text>
<text x="1996.3" y="1046.6" font-family="'Liberation Serif',serif" font-size="16" font-weight="400" fill="#3c3020" text-anchor="start">B</text>
<text x="1912.0" y="1046.0" font-family="'Liberation Serif',serif" font-size="16" font-weight="400" fill="#3c3020" text-anchor="start">D65</text>
<text x="1716.1" y="1341.2" font-family="'Liberation Serif',serif" font-size="17" font-weight="400" fill="#f0f0f0" text-anchor="start" textLength="20.8" lengthAdjust="spacingAndGlyphs">0.1</text>
<text x="1827.8" y="1341.2" font-family="'Liberation Serif',serif" font-size="17" font-weight="400" fill="#f0f0f0" text-anchor="start" textLength="20.8" lengthAdjust="spacingAndGlyphs">0.2</text>
<text x="1939.4" y="1341.2" font-family="'Liberation Serif',serif" font-size="17" font-weight="400" fill="#f0f0f0" text-anchor="start" textLength="20.8" lengthAdjust="spacingAndGlyphs">0.3</text>
<text x="2051.0" y="1341.2" font-family="'Liberation Serif',serif" font-size="17" font-weight="400" fill="#f0f0f0" text-anchor="start" textLength="20.8" lengthAdjust="spacingAndGlyphs">0.4</text>
<text x="2162.7" y="1341.2" font-family="'Liberation Serif',serif" font-size="17" font-weight="400" fill="#f0f0f0" text-anchor="start" textLength="20.8" lengthAdjust="spacingAndGlyphs">0.5</text>
<text x="2274.3" y="1341.2" font-family="'Liberation Serif',serif" font-size="17" font-weight="400" fill="#f0f0f0" text-anchor="start" textLength="20.8" lengthAdjust="spacingAndGlyphs">0.6</text>
<text x="2385.9" y="1341.2" font-family="'Liberation Serif',serif" font-size="17" font-weight="400" fill="#f0f0f0" text-anchor="start" textLength="20.8" lengthAdjust="spacingAndGlyphs">0.7</text>
<text x="1520.2" y="1221.6" font-family="'Liberation Serif',serif" font-size="17" font-weight="400" fill="#f0f0f0" text-anchor="start" textLength="20.8" lengthAdjust="spacingAndGlyphs">0.1</text>
<text x="1520.2" y="1142.3" font-family="'Liberation Serif',serif" font-size="17" font-weight="400" fill="#f0f0f0" text-anchor="start" textLength="20.8" lengthAdjust="spacingAndGlyphs">0.2</text>
<text x="1520.2" y="1063.1" font-family="'Liberation Serif',serif" font-size="17" font-weight="400" fill="#f0f0f0" text-anchor="start" textLength="20.8" lengthAdjust="spacingAndGlyphs">0.3</text>
<text x="1520.2" y="983.9" font-family="'Liberation Serif',serif" font-size="17" font-weight="400" fill="#f0f0f0" text-anchor="start" textLength="20.8" lengthAdjust="spacingAndGlyphs">0.4</text>
<text x="1520.2" y="904.6" font-family="'Liberation Serif',serif" font-size="17" font-weight="400" fill="#f0f0f0" text-anchor="start" textLength="20.8" lengthAdjust="spacingAndGlyphs">0.5</text>
<text x="1520.2" y="825.4" font-family="'Liberation Serif',serif" font-size="17" font-weight="400" fill="#f0f0f0" text-anchor="start" textLength="20.8" lengthAdjust="spacingAndGlyphs">0.6</text>
<text x="1520.2" y="746.2" font-family="'Liberation Serif',serif" font-size="17" font-weight="400" fill="#f0f0f0" text-anchor="start" textLength="20.8" lengthAdjust="spacingAndGlyphs">0.7</text>
<text x="1520.2" y="667.0" font-family="'Liberation Serif',serif" font-size="17" font-weight="400" fill="#f0f0f0" text-anchor="start" textLength="20.8" lengthAdjust="spacingAndGlyphs">0.8</text>
<path d="M1727 607L1705.2 640M1894.4 680L1872.9 711.9M2048.3 783.7L2026 815M2156 858.5L2134.2 891.9M2231 911.7L2209.2 945M2300.8 962.7L2279.6 995M2377.5 1015.8L2356 1048.1M2410.2 1039.8L2389.4 1073.1M2423.7 1050.2L2403 1082.5M1585.4 845.6L1605.2 838.3M1669.8 1174.2L1689.6 1167M1719.2 1263.3L1739.2 1256M1735 1284.8L1754.6 1277.5M1745.8 1294.6L1765.6 1287.7" stroke="#8e949c" stroke-width="1.5" fill="none"/>
<text x="1727.0" y="615.0" font-family="'Liberation Serif',serif" font-size="14.8" font-weight="400" fill="#dcdcdc" text-anchor="start" textLength="43.8" lengthAdjust="spacingAndGlyphs">520 nm</text>
<text x="1894.4" y="687.5" font-family="'Liberation Serif',serif" font-size="14.8" font-weight="400" fill="#dcdcdc" text-anchor="start" textLength="43.8" lengthAdjust="spacingAndGlyphs">540 nm</text>
<text x="2048.3" y="791.0" font-family="'Liberation Serif',serif" font-size="14.8" font-weight="400" fill="#dcdcdc" text-anchor="start" textLength="43.8" lengthAdjust="spacingAndGlyphs">560 nm</text>
<text x="2156.0" y="866.9" font-family="'Liberation Serif',serif" font-size="14.8" font-weight="400" fill="#dcdcdc" text-anchor="start" textLength="43.8" lengthAdjust="spacingAndGlyphs">580 nm</text>
<text x="2231.0" y="920.0" font-family="'Liberation Serif',serif" font-size="14.8" font-weight="400" fill="#dcdcdc" text-anchor="start" textLength="43.8" lengthAdjust="spacingAndGlyphs">600 nm</text>
<text x="2300.8" y="970.0" font-family="'Liberation Serif',serif" font-size="14.8" font-weight="400" fill="#dcdcdc" text-anchor="start" textLength="43.8" lengthAdjust="spacingAndGlyphs">620 nm</text>
<text x="2377.5" y="1023.7" font-family="'Liberation Serif',serif" font-size="14.8" font-weight="400" fill="#dcdcdc" text-anchor="start" textLength="43.8" lengthAdjust="spacingAndGlyphs">640 nm</text>
<text x="2410.2" y="1047.0" font-family="'Liberation Serif',serif" font-size="14.8" font-weight="400" fill="#dcdcdc" text-anchor="start" textLength="43.8" lengthAdjust="spacingAndGlyphs">660 nm</text>
<text x="2423.7" y="1057.0" font-family="'Liberation Serif',serif" font-size="14.8" font-weight="400" fill="#dcdcdc" text-anchor="start" textLength="43.8" lengthAdjust="spacingAndGlyphs">680 nm</text>
<text x="1548.0" y="859.6" font-family="'Liberation Serif',serif" font-size="14.8" font-weight="400" fill="#dcdcdc" text-anchor="start" textLength="43.8" lengthAdjust="spacingAndGlyphs">500 nm</text>
<text x="1632.3" y="1188.3" font-family="'Liberation Serif',serif" font-size="14.8" font-weight="400" fill="#dcdcdc" text-anchor="start" textLength="43.8" lengthAdjust="spacingAndGlyphs">480 nm</text>
<text x="1682.3" y="1276.9" font-family="'Liberation Serif',serif" font-size="14.8" font-weight="400" fill="#dcdcdc" text-anchor="start" textLength="43.8" lengthAdjust="spacingAndGlyphs">460 nm</text>
<text x="1697.5" y="1298.3" font-family="'Liberation Serif',serif" font-size="14.8" font-weight="400" fill="#dcdcdc" text-anchor="start" textLength="43.8" lengthAdjust="spacingAndGlyphs">440 nm</text>
<text x="1708.7" y="1309.0" font-family="'Liberation Serif',serif" font-size="14.8" font-weight="400" fill="#dcdcdc" text-anchor="start" textLength="43.8" lengthAdjust="spacingAndGlyphs">420 nm</text>
<text x="2316.5" y="1270.0" font-family="'Liberation Sans',sans-serif" font-size="20.5" font-weight="700" fill="#454545" text-anchor="start" textLength="194.3" lengthAdjust="spacingAndGlyphs">hcfr.sourceforge.net</text>
<rect x="1934.3" y="906.2" width="15" height="15" fill="rgba(255,255,255,.1)" stroke="#d09640" stroke-width="2.1"/><rect x="1936.6" y="908.5" width="10.4" height="10.4" fill="none" stroke="#6e7650" stroke-width="1.3"/><path d="M1933.3 905.2l3.500 3.500M1950.3 905.2l-3.500 3.500M1933.3 922.2l3.500-3.500M1950.3 922.2l-3.500-3.500" stroke="#f0e0c0" stroke-width=".9" opacity=".85"/>
<rect x="2015.5" y="907.1" width="15" height="15" fill="rgba(255,255,255,.1)" stroke="#d09640" stroke-width="2.1"/><rect x="2017.8" y="909.4" width="10.4" height="10.4" fill="none" stroke="#6e7650" stroke-width="1.3"/><path d="M2014.5 906.1l3.500 3.500M2031.5 906.1l-3.500 3.500M2014.5 923.1l3.500-3.500M2031.5 923.1l-3.500-3.500" stroke="#f0e0c0" stroke-width=".9" opacity=".85"/>
<rect x="1975.3" y="956.8" width="15" height="15" fill="rgba(255,255,255,.1)" stroke="#d09640" stroke-width="2.1"/><rect x="1977.6" y="959.1" width="10.4" height="10.4" fill="none" stroke="#6e7650" stroke-width="1.3"/><path d="M1974.3 955.8l3.500 3.500M1991.3 955.8l-3.500 3.500M1974.3 972.8l3.500-3.500M1991.3 972.8l-3.500-3.500" stroke="#f0e0c0" stroke-width=".9" opacity=".85"/>
<rect x="1885.0" y="1013.5" width="15" height="15" fill="rgba(255,255,255,.1)" stroke="#d09640" stroke-width="2.1"/><rect x="1887.3" y="1015.8" width="10.4" height="10.4" fill="none" stroke="#6e7650" stroke-width="1.3"/><path d="M1884.0 1012.5l3.500 3.500M1901.0 1012.5l-3.500 3.500M1884.0 1029.5l3.500-3.500M1901.0 1029.5l-3.500-3.500" stroke="#f0e0c0" stroke-width=".9" opacity=".85"/>
<rect x="2015.5" y="1016.3" width="15" height="15" fill="rgba(255,255,255,.1)" stroke="#d09640" stroke-width="2.1"/><rect x="2017.8" y="1018.6" width="10.4" height="10.4" fill="none" stroke="#6e7650" stroke-width="1.3"/><path d="M2014.5 1015.3l3.500 3.500M2031.5 1015.3l-3.500 3.500M2014.5 1032.3l3.500-3.500M2031.5 1032.3l-3.500-3.500" stroke="#f0e0c0" stroke-width=".9" opacity=".85"/>
<rect x="2046.8" y="1010.3" width="15" height="15" fill="rgba(255,255,255,.1)" stroke="#d09640" stroke-width="2.1"/><rect x="2049.1" y="1012.6" width="10.4" height="10.4" fill="none" stroke="#6e7650" stroke-width="1.3"/><path d="M2045.8 1009.3l3.500 3.500M2062.8 1009.3l-3.500 3.500M2045.8 1026.3l3.500-3.500M2062.8 1026.3l-3.500-3.500" stroke="#f0e0c0" stroke-width=".9" opacity=".85"/>
<rect x="2093.3" y="921.9" width="15" height="15" fill="rgba(255,255,255,.1)" stroke="#d09640" stroke-width="2.1"/><rect x="2095.6" y="924.2" width="10.4" height="10.4" fill="none" stroke="#6e7650" stroke-width="1.3"/><path d="M2092.3 920.9l3.500 3.500M2109.3 920.9l-3.500 3.500M2092.3 937.9l3.500-3.500M2109.3 937.9l-3.500-3.500" stroke="#f0e0c0" stroke-width=".9" opacity=".85"/>
<rect x="2122.5" y="947.9" width="15" height="15" fill="rgba(255,255,255,.1)" stroke="#d09640" stroke-width="2.1"/><rect x="2124.8" y="950.2" width="10.4" height="10.4" fill="none" stroke="#6e7650" stroke-width="1.3"/><path d="M2121.5 946.9l3.500 3.500M2138.5 946.9l-3.500 3.500M2121.5 963.9l3.500-3.500M2138.5 963.9l-3.500-3.500" stroke="#f0e0c0" stroke-width=".9" opacity=".85"/>
<rect x="2167.9" y="974.5" width="15" height="15" fill="rgba(255,255,255,.1)" stroke="#d09640" stroke-width="2.1"/><rect x="2170.2" y="976.8" width="10.4" height="10.4" fill="none" stroke="#6e7650" stroke-width="1.3"/><path d="M2166.9 973.5l3.500 3.500M2183.9 973.5l-3.500 3.500M2166.9 990.5l3.500-3.500M2183.9 990.5l-3.500-3.500" stroke="#f0e0c0" stroke-width=".9" opacity=".85"/>
<rect x="2112.1" y="1052.1" width="15" height="15" fill="rgba(255,255,255,.1)" stroke="#d09640" stroke-width="2.1"/><rect x="2114.4" y="1054.4" width="10.4" height="10.4" fill="none" stroke="#6e7650" stroke-width="1.3"/><path d="M2111.1 1051.1l3.500 3.500M2128.1 1051.1l-3.500 3.500M2111.1 1068.1l3.500-3.500M2128.1 1068.1l-3.500-3.500" stroke="#f0e0c0" stroke-width=".9" opacity=".85"/>
<rect x="2204.2" y="1046.9" width="15" height="15" fill="rgba(255,255,255,.1)" stroke="#d09640" stroke-width="2.1"/><rect x="2206.5" y="1049.2" width="10.4" height="10.4" fill="none" stroke="#6e7650" stroke-width="1.3"/><path d="M2203.2 1045.9l3.500 3.500M2220.2 1045.9l-3.500 3.500M2203.2 1062.9l3.500-3.500M2220.2 1062.9l-3.500-3.500" stroke="#f0e0c0" stroke-width=".9" opacity=".85"/>
<rect x="1804.4" y="1191.7" width="15" height="15" fill="rgba(255,255,255,.1)" stroke="#d09640" stroke-width="2.1"/><rect x="1806.7" y="1194.0" width="10.4" height="10.4" fill="none" stroke="#6e7650" stroke-width="1.3"/><path d="M1803.4 1190.7l3.500 3.500M1820.4 1190.7l-3.500 3.500M1803.4 1207.7l3.500-3.500M1820.4 1207.7l-3.500-3.500" stroke="#f0e0c0" stroke-width=".9" opacity=".85"/>
<rect x="1833.1" y="1149.2" width="15" height="15" fill="rgba(255,255,255,.1)" stroke="#d09640" stroke-width="2.1"/><rect x="1835.4" y="1151.5" width="10.4" height="10.4" fill="none" stroke="#6e7650" stroke-width="1.3"/><path d="M1832.1 1148.2l3.500 3.500M1849.1 1148.2l-3.500 3.500M1832.1 1165.2l3.500-3.500M1849.1 1165.2l-3.500-3.500" stroke="#f0e0c0" stroke-width=".9" opacity=".85"/>
<rect x="1892.9" y="1099.5" width="15" height="15" fill="rgba(255,255,255,.1)" stroke="#d09640" stroke-width="2.1"/><rect x="1895.2" y="1101.8" width="10.4" height="10.4" fill="none" stroke="#6e7650" stroke-width="1.3"/><path d="M1891.9 1098.5l3.500 3.500M1908.9 1098.5l-3.500 3.500M1891.9 1115.5l3.500-3.500M1908.9 1115.5l-3.500-3.500" stroke="#f0e0c0" stroke-width=".9" opacity=".85"/>
<rect x="1825.8" y="1086.0" width="15" height="15" fill="rgba(255,255,255,.1)" stroke="#d09640" stroke-width="2.1"/><rect x="1828.1" y="1088.3" width="10.4" height="10.4" fill="none" stroke="#6e7650" stroke-width="1.3"/><path d="M1824.8 1085.0l3.500 3.500M1841.8 1085.0l-3.500 3.500M1824.8 1102.0l3.500-3.500M1841.8 1102.0l-3.500-3.500" stroke="#f0e0c0" stroke-width=".9" opacity=".85"/>
<rect x="1871.7" y="1089.5" width="15" height="15" fill="rgba(255,255,255,.1)" stroke="#d09640" stroke-width="2.1"/><rect x="1874.0" y="1091.8" width="10.4" height="10.4" fill="none" stroke="#6e7650" stroke-width="1.3"/><path d="M1870.7 1088.5l3.500 3.500M1887.7 1088.5l-3.500 3.500M1870.7 1105.5l3.500-3.500M1887.7 1105.5l-3.500-3.500" stroke="#f0e0c0" stroke-width=".9" opacity=".85"/>
<rect x="1915.5" y="1128.3" width="15" height="15" fill="rgba(255,255,255,.1)" stroke="#d09640" stroke-width="2.1"/><rect x="1917.8" y="1130.6" width="10.4" height="10.4" fill="none" stroke="#6e7650" stroke-width="1.3"/><path d="M1914.5 1127.3l3.500 3.500M1931.5 1127.3l-3.500 3.500M1914.5 1144.3l3.500-3.500M1931.5 1144.3l-3.500-3.500" stroke="#f0e0c0" stroke-width=".9" opacity=".85"/>
<rect x="2010.2" y="1105.8" width="15" height="15" fill="rgba(255,255,255,.1)" stroke="#d09640" stroke-width="2.1"/><rect x="2012.5" y="1108.1" width="10.4" height="10.4" fill="none" stroke="#6e7650" stroke-width="1.3"/><path d="M2009.2 1104.8l3.500 3.500M2026.2 1104.8l-3.500 3.500M2009.2 1121.8l3.500-3.500M2026.2 1121.8l-3.500-3.500" stroke="#f0e0c0" stroke-width=".9" opacity=".85"/>
<rect x="1942.8" y="1038.9" width="15" height="15" fill="rgba(255,255,255,.1)" stroke="#d09640" stroke-width="2.1"/><rect x="1945.1" y="1041.2" width="10.4" height="10.4" fill="none" stroke="#6e7650" stroke-width="1.3"/><path d="M1941.8 1037.9l3.500 3.500M1958.8 1037.9l-3.500 3.500M1941.8 1054.9l3.500-3.500M1958.8 1054.9l-3.500-3.500" stroke="#f0e0c0" stroke-width=".9" opacity=".85"/>
<rect x="1928.5" y="822.5" width="16.5" height="16.5" fill="none" stroke="#c02050" stroke-width="1.2"/><path d="M1928.5 839.0V822.5H1945.0" fill="none" stroke="#202090" stroke-width="1.2"/><rect x="1930.5" y="824.5" width="12.5" height="12.5" fill="none" stroke="#20e020" stroke-width="2.6"/>
<rect x="1931.2" y="876.5" width="16.5" height="16.5" fill="none" stroke="#c02050" stroke-width="1.2"/><path d="M1931.2 893.0V876.5H1947.8" fill="none" stroke="#202090" stroke-width="1.2"/><rect x="1933.2" y="878.5" width="12.5" height="12.5" fill="none" stroke="#20e020" stroke-width="2.6"/>
<rect x="1934.8" y="930.8" width="16.5" height="16.5" fill="none" stroke="#c02050" stroke-width="1.2"/><path d="M1934.8 947.2V930.8H1951.2" fill="none" stroke="#202090" stroke-width="1.2"/><rect x="1936.8" y="932.8" width="12.5" height="12.5" fill="none" stroke="#20e020" stroke-width="2.6"/>
<rect x="1938.5" y="983.0" width="16.5" height="16.5" fill="none" stroke="#c02050" stroke-width="1.2"/><path d="M1938.5 999.5V983.0H1955.0" fill="none" stroke="#202090" stroke-width="1.2"/><rect x="1940.5" y="985.0" width="12.5" height="12.5" fill="none" stroke="#20e020" stroke-width="2.6"/>
<rect x="2061.2" y="897.4" width="16.5" height="16.5" fill="none" stroke="#c02050" stroke-width="1.2"/><path d="M2061.2 913.9V897.4H2077.7" fill="none" stroke="#202090" stroke-width="1.2"/><rect x="2063.2" y="899.4" width="12.5" height="12.5" fill="none" stroke="#ffe818" stroke-width="2.6"/>
<rect x="2031.0" y="933.5" width="16.5" height="16.5" fill="none" stroke="#c02050" stroke-width="1.2"/><path d="M2031.0 950.0V933.5H2047.5" fill="none" stroke="#202090" stroke-width="1.2"/><rect x="2033.0" y="935.5" width="12.5" height="12.5" fill="none" stroke="#ffe818" stroke-width="2.6"/>
<rect x="2000.8" y="968.6" width="16.5" height="16.5" fill="none" stroke="#c02050" stroke-width="1.2"/><path d="M2000.8 985.1V968.6H2017.2" fill="none" stroke="#202090" stroke-width="1.2"/><rect x="2002.8" y="970.6" width="12.5" height="12.5" fill="none" stroke="#ffe818" stroke-width="2.6"/>
<rect x="1971.0" y="1003.9" width="16.5" height="16.5" fill="none" stroke="#c02050" stroke-width="1.2"/><path d="M1971.0 1020.4V1003.9H1987.5" fill="none" stroke="#202090" stroke-width="1.2"/><rect x="1973.0" y="1005.9" width="12.5" height="12.5" fill="none" stroke="#ffe818" stroke-width="2.6"/>
<rect x="1843.3" y="1037.2" width="16.5" height="16.5" fill="none" stroke="#c02050" stroke-width="1.2"/><path d="M1843.3 1053.8V1037.2H1859.8" fill="none" stroke="#202090" stroke-width="1.2"/><rect x="1845.3" y="1039.2" width="12.5" height="12.5" fill="none" stroke="#40f0ff" stroke-width="2.6"/>
<rect x="1868.0" y="1037.2" width="16.5" height="16.5" fill="none" stroke="#c02050" stroke-width="1.2"/><path d="M1868.0 1053.8V1037.2H1884.5" fill="none" stroke="#202090" stroke-width="1.2"/><rect x="1870.0" y="1039.2" width="12.5" height="12.5" fill="none" stroke="#40f0ff" stroke-width="2.6"/>
<rect x="1893.0" y="1037.2" width="16.5" height="16.5" fill="none" stroke="#c02050" stroke-width="1.2"/><path d="M1893.0 1053.8V1037.2H1909.5" fill="none" stroke="#202090" stroke-width="1.2"/><rect x="1895.0" y="1039.2" width="12.5" height="12.5" fill="none" stroke="#40f0ff" stroke-width="2.6"/>
<rect x="1917.7" y="1037.2" width="16.5" height="16.5" fill="none" stroke="#c02050" stroke-width="1.2"/><path d="M1917.7 1053.8V1037.2H1934.2" fill="none" stroke="#202090" stroke-width="1.2"/><rect x="1919.7" y="1039.2" width="12.5" height="12.5" fill="none" stroke="#40f0ff" stroke-width="2.6"/>
<rect x="2032.2" y="1037.0" width="16.5" height="16.5" fill="none" stroke="#c02050" stroke-width="1.2"/><path d="M2032.2 1053.5V1037.0H2048.8" fill="none" stroke="#202090" stroke-width="1.2"/><rect x="2034.2" y="1039.0" width="12.5" height="12.5" fill="none" stroke="#ff1010" stroke-width="2.6"/>
<rect x="2122.8" y="1036.8" width="16.5" height="16.5" fill="none" stroke="#c02050" stroke-width="1.2"/><path d="M2122.8 1053.2V1036.8H2139.2" fill="none" stroke="#202090" stroke-width="1.2"/><rect x="2124.8" y="1038.8" width="12.5" height="12.5" fill="none" stroke="#ff1010" stroke-width="2.6"/>
<rect x="2214.4" y="1037.2" width="16.5" height="16.5" fill="none" stroke="#c02050" stroke-width="1.2"/><path d="M2214.4 1053.7V1037.2H2230.9" fill="none" stroke="#202090" stroke-width="1.2"/><rect x="2216.4" y="1039.2" width="12.5" height="12.5" fill="none" stroke="#ff1010" stroke-width="2.6"/>
<rect x="2307.6" y="1037.2" width="16.5" height="16.5" fill="none" stroke="#c02050" stroke-width="1.2"/><path d="M2307.6 1053.7V1037.2H2324.1" fill="none" stroke="#202090" stroke-width="1.2"/><rect x="2309.6" y="1039.2" width="12.5" height="12.5" fill="none" stroke="#ff1010" stroke-width="2.6"/>
<rect x="1760.5" y="1251.3" width="16.5" height="16.5" fill="none" stroke="#c02050" stroke-width="1.2"/><path d="M1760.5 1267.8V1251.3H1777.0" fill="none" stroke="#202090" stroke-width="1.2"/><rect x="1762.5" y="1253.3" width="12.5" height="12.5" fill="none" stroke="#3818ff" stroke-width="2.6"/>
<rect x="1806.3" y="1197.8" width="16.5" height="16.5" fill="none" stroke="#c02050" stroke-width="1.2"/><path d="M1806.3 1214.2V1197.8H1822.8" fill="none" stroke="#202090" stroke-width="1.2"/><rect x="1808.3" y="1199.8" width="12.5" height="12.5" fill="none" stroke="#3818ff" stroke-width="2.6"/>
<rect x="1851.2" y="1144.7" width="16.5" height="16.5" fill="none" stroke="#c02050" stroke-width="1.2"/><path d="M1851.2 1161.2V1144.7H1867.7" fill="none" stroke="#202090" stroke-width="1.2"/><rect x="1853.2" y="1146.7" width="12.5" height="12.5" fill="none" stroke="#3818ff" stroke-width="2.6"/>
<rect x="1896.0" y="1091.5" width="16.5" height="16.5" fill="none" stroke="#c02050" stroke-width="1.2"/><path d="M1896.0 1108.0V1091.5H1912.5" fill="none" stroke="#202090" stroke-width="1.2"/><rect x="1898.0" y="1093.5" width="12.5" height="12.5" fill="none" stroke="#3818ff" stroke-width="2.6"/>
<rect x="1945.5" y="1073.8" width="16.5" height="16.5" fill="none" stroke="#c02050" stroke-width="1.2"/><path d="M1945.5 1090.2V1073.8H1962.0" fill="none" stroke="#202090" stroke-width="1.2"/><rect x="1947.5" y="1075.8" width="12.5" height="12.5" fill="none" stroke="#ff18f0" stroke-width="2.6"/>
<rect x="1946.3" y="1106.2" width="16.5" height="16.5" fill="none" stroke="#c02050" stroke-width="1.2"/><path d="M1946.3 1122.7V1106.2H1962.8" fill="none" stroke="#202090" stroke-width="1.2"/><rect x="1948.3" y="1108.2" width="12.5" height="12.5" fill="none" stroke="#ff18f0" stroke-width="2.6"/>
<rect x="1948.7" y="1141.2" width="16.5" height="16.5" fill="none" stroke="#c02050" stroke-width="1.2"/><path d="M1948.7 1157.7V1141.2H1965.2" fill="none" stroke="#202090" stroke-width="1.2"/><rect x="1950.7" y="1143.2" width="12.5" height="12.5" fill="none" stroke="#ff18f0" stroke-width="2.6"/>
<rect x="1951.2" y="1176.0" width="16.5" height="16.5" fill="none" stroke="#c02050" stroke-width="1.2"/><path d="M1951.2 1192.5V1176.0H1967.7" fill="none" stroke="#202090" stroke-width="1.2"/><rect x="1953.2" y="1178.0" width="12.5" height="12.5" fill="none" stroke="#ff18f0" stroke-width="2.6"/>
<path d="M1847.6 1045.5h8M1851.6 1041.5v8" stroke="#101010" stroke-width="1.6"/>
<path d="M1955.4 1184.2h8M1959.4 1180.2v8" stroke="#101010" stroke-width="1.6"/>
<circle cx="1935.5" cy="827.3" r="6.9" fill="#000" opacity=".45" filter="url(#bl)"/><circle cx="1934.0" cy="825.3" r="6.9" fill="url(#mg)"/><circle cx="1934.5" cy="825.8" r="1.1" fill="#101010"/>
<circle cx="1941.5" cy="880.0" r="6.9" fill="#000" opacity=".45" filter="url(#bl)"/><circle cx="1940.0" cy="878.0" r="6.9" fill="url(#mg)"/><circle cx="1940.5" cy="878.5" r="1.1" fill="#101010"/>
<circle cx="1946.4" cy="933.8" r="6.9" fill="#000" opacity=".45" filter="url(#bl)"/><circle cx="1944.9" cy="931.8" r="6.9" fill="url(#mg)"/><circle cx="1945.4" cy="932.3" r="1.1" fill="#101010"/>
<circle cx="1950.9" cy="985.8" r="6.9" fill="#000" opacity=".45" filter="url(#bl)"/><circle cx="1949.4" cy="983.8" r="6.9" fill="url(#mg)"/><circle cx="1949.9" cy="984.3" r="1.1" fill="#101010"/>
<circle cx="2072.0" cy="905.6" r="7.2" fill="#000" opacity=".45" filter="url(#bl)"/><circle cx="2070.5" cy="903.6" r="7.2" fill="url(#my)"/><circle cx="2071.0" cy="904.1" r="1.1" fill="#2030a0"/>
<circle cx="2047.5" cy="938.3" r="7.2" fill="#000" opacity=".45" filter="url(#bl)"/><circle cx="2046.0" cy="936.3" r="7.2" fill="url(#my)"/><circle cx="2046.5" cy="936.8" r="1.1" fill="#2030a0"/>
<circle cx="2019.5" cy="971.7" r="7.2" fill="#000" opacity=".45" filter="url(#bl)"/><circle cx="2018.0" cy="969.7" r="7.2" fill="url(#my)"/><circle cx="2018.5" cy="970.2" r="1.1" fill="#2030a0"/>
<circle cx="1990.2" cy="1004.2" r="7.2" fill="#000" opacity=".45" filter="url(#bl)"/><circle cx="1988.7" cy="1002.2" r="7.2" fill="url(#my)"/><circle cx="1989.2" cy="1002.7" r="1.1" fill="#2030a0"/>
<circle cx="1856.1" cy="1034.9" r="7.2" fill="#000" opacity=".45" filter="url(#bl)"/><circle cx="1854.6" cy="1032.9" r="7.2" fill="url(#mc)"/><circle cx="1855.1" cy="1033.4" r="1.1" fill="#a03030"/>
<circle cx="1882.7" cy="1035.8" r="7.2" fill="#000" opacity=".45" filter="url(#bl)"/><circle cx="1881.2" cy="1033.8" r="7.2" fill="url(#mc)"/><circle cx="1881.7" cy="1034.3" r="1.1" fill="#a03030"/>
<circle cx="1906.7" cy="1036.7" r="7.2" fill="#000" opacity=".45" filter="url(#bl)"/><circle cx="1905.2" cy="1034.7" r="7.2" fill="url(#mc)"/><circle cx="1905.7" cy="1035.2" r="1.1" fill="#a03030"/>
<circle cx="1931.4" cy="1037.6" r="7.2" fill="#000" opacity=".45" filter="url(#bl)"/><circle cx="1929.9" cy="1035.6" r="7.2" fill="url(#mc)"/><circle cx="1930.4" cy="1036.1" r="1.1" fill="#a03030"/>
<circle cx="2051.2" cy="1041.5" r="6.9" fill="#000" opacity=".45" filter="url(#bl)"/><circle cx="2049.7" cy="1039.5" r="6.9" fill="url(#mr)"/>
<circle cx="2147.8" cy="1044.5" r="6.9" fill="#000" opacity=".45" filter="url(#bl)"/><circle cx="2146.3" cy="1042.5" r="6.9" fill="url(#mr)"/>
<circle cx="2236.7" cy="1047.4" r="6.9" fill="#000" opacity=".45" filter="url(#bl)"/><circle cx="2235.2" cy="1045.4" r="6.9" fill="url(#mr)"/>
<circle cx="2317.3" cy="1047.0" r="6.9" fill="#000" opacity=".45" filter="url(#bl)"/><circle cx="2315.8" cy="1045.0" r="6.9" fill="url(#mr)"/>
<circle cx="1776.5" cy="1261.6" r="6.9" fill="#000" opacity=".45" filter="url(#bl)"/><circle cx="1775.0" cy="1259.6" r="6.9" fill="url(#mb)"/>
<circle cx="1817.1" cy="1206.6" r="6.9" fill="#000" opacity=".45" filter="url(#bl)"/><circle cx="1815.6" cy="1204.6" r="6.9" fill="url(#mb)"/>
<circle cx="1865.0" cy="1149.0" r="6.9" fill="#000" opacity=".45" filter="url(#bl)"/><circle cx="1863.5" cy="1147.0" r="6.9" fill="url(#mb)"/>
<circle cx="1907.7" cy="1095.2" r="6.9" fill="#000" opacity=".45" filter="url(#bl)"/><circle cx="1906.2" cy="1093.2" r="6.9" fill="url(#mb)"/>
<circle cx="1958.8" cy="1076.2" r="6.9" fill="#000" opacity=".45" filter="url(#bl)"/><circle cx="1957.3" cy="1074.2" r="6.9" fill="url(#mm)"/><circle cx="1957.8" cy="1074.7" r="1.1" fill="#401040"/>
<circle cx="1963.0" cy="1112.4" r="6.9" fill="#000" opacity=".45" filter="url(#bl)"/><circle cx="1961.5" cy="1110.4" r="6.9" fill="url(#mm)"/><circle cx="1962.0" cy="1110.9" r="1.1" fill="#401040"/>
<circle cx="1965.0" cy="1148.7" r="6.9" fill="#000" opacity=".45" filter="url(#bl)"/><circle cx="1963.5" cy="1146.7" r="6.9" fill="url(#mm)"/><circle cx="1964.0" cy="1147.2" r="1.1" fill="#401040"/>
<circle cx="1974.0" cy="1182.4" r="6.9" fill="#000" opacity=".45" filter="url(#bl)"/><circle cx="1972.5" cy="1180.4" r="6.9" fill="url(#mm)"/><circle cx="1973.0" cy="1180.9" r="1.1" fill="#401040"/>
<circle cx="1943.3" cy="907.6" r="6.1" fill="#000" opacity=".5" filter="url(#bl)"/><circle cx="1941.8" cy="905.6" r="6.1" fill="url(#mw)" stroke="#404040" stroke-width="1.3"/>
<circle cx="2025.8" cy="910.3" r="6.1" fill="#000" opacity=".5" filter="url(#bl)"/><circle cx="2024.3" cy="908.3" r="6.1" fill="url(#mw)" stroke="#404040" stroke-width="1.3"/>
<circle cx="1986.1" cy="956.9" r="6.1" fill="#000" opacity=".5" filter="url(#bl)"/><circle cx="1984.6" cy="954.9" r="6.1" fill="url(#mw)" stroke="#404040" stroke-width="1.3"/>
<circle cx="1897.1" cy="1012.3" r="6.1" fill="#000" opacity=".5" filter="url(#bl)"/><circle cx="1895.6" cy="1010.3" r="6.1" fill="url(#mw)" stroke="#404040" stroke-width="1.3"/>
<circle cx="2028.5" cy="1017.7" r="6.1" fill="#000" opacity=".5" filter="url(#bl)"/><circle cx="2027.0" cy="1015.7" r="6.1" fill="url(#mw)" stroke="#404040" stroke-width="1.3"/>
<circle cx="2063.7" cy="1012.4" r="6.1" fill="#000" opacity=".5" filter="url(#bl)"/><circle cx="2062.2" cy="1010.4" r="6.1" fill="url(#mw)" stroke="#404040" stroke-width="1.3"/>
<circle cx="2109.6" cy="930.3" r="6.1" fill="#000" opacity=".5" filter="url(#bl)"/><circle cx="2108.1" cy="928.3" r="6.1" fill="url(#mw)" stroke="#404040" stroke-width="1.3"/>
<circle cx="2137.3" cy="951.6" r="6.1" fill="#000" opacity=".5" filter="url(#bl)"/><circle cx="2135.8" cy="949.6" r="6.1" fill="url(#mw)" stroke="#404040" stroke-width="1.3"/>
<circle cx="2182.5" cy="977.8" r="6.1" fill="#000" opacity=".5" filter="url(#bl)"/><circle cx="2181.0" cy="975.8" r="6.1" fill="url(#mw)" stroke="#404040" stroke-width="1.3"/>
<circle cx="2131.1" cy="1059.0" r="6.1" fill="#000" opacity=".5" filter="url(#bl)"/><circle cx="2129.6" cy="1057.0" r="6.1" fill="url(#mw)" stroke="#404040" stroke-width="1.3"/>
<circle cx="2227.3" cy="1055.3" r="6.1" fill="#000" opacity=".5" filter="url(#bl)"/><circle cx="2225.8" cy="1053.3" r="6.1" fill="url(#mw)" stroke="#404040" stroke-width="1.3"/>
<circle cx="1815.0" cy="1199.0" r="6.1" fill="#000" opacity=".5" filter="url(#bl)"/><circle cx="1813.5" cy="1197.0" r="6.1" fill="url(#mw)" stroke="#404040" stroke-width="1.3"/>
<circle cx="1844.8" cy="1153.9" r="6.1" fill="#000" opacity=".5" filter="url(#bl)"/><circle cx="1843.3" cy="1151.9" r="6.1" fill="url(#mw)" stroke="#404040" stroke-width="1.3"/>
<circle cx="1905.5" cy="1102.8" r="6.1" fill="#000" opacity=".5" filter="url(#bl)"/><circle cx="1904.0" cy="1100.8" r="6.1" fill="url(#mw)" stroke="#404040" stroke-width="1.3"/>
<circle cx="1837.3" cy="1086.6" r="6.1" fill="#000" opacity=".5" filter="url(#bl)"/><circle cx="1835.8" cy="1084.6" r="6.1" fill="url(#mw)" stroke="#404040" stroke-width="1.3"/>
<circle cx="1882.3" cy="1092.6" r="6.1" fill="#000" opacity=".5" filter="url(#bl)"/><circle cx="1880.8" cy="1090.6" r="6.1" fill="url(#mw)" stroke="#404040" stroke-width="1.3"/>
<circle cx="1928.5" cy="1134.0" r="6.1" fill="#000" opacity=".5" filter="url(#bl)"/><circle cx="1927.0" cy="1132.0" r="6.1" fill="url(#mw)" stroke="#404040" stroke-width="1.3"/>
<circle cx="2027.5" cy="1112.2" r="6.1" fill="#000" opacity=".5" filter="url(#bl)"/><circle cx="2026.0" cy="1110.2" r="6.1" fill="url(#mw)" stroke="#404040" stroke-width="1.3"/>
<circle cx="1874.5" cy="1153.2" r="6.1" fill="#000" opacity=".5" filter="url(#bl)"/><circle cx="1873.0" cy="1151.2" r="6.1" fill="url(#mw)" stroke="#404040" stroke-width="1.3"/>
<circle cx="1936.5" cy="1069.5" r="5.6" fill="#000" opacity=".5" filter="url(#bl)"/><circle cx="1935.0" cy="1067.5" r="5.6" fill="url(#mw)" stroke="#404040" stroke-width="1.3"/>
<circle cx="1981.9" cy="1047.5" r="6.1" fill="#000" opacity=".5" filter="url(#bl)"/><circle cx="1980.4" cy="1045.5" r="6.1" fill="url(#mw)" stroke="#404040" stroke-width="1.3"/>
<circle cx="1954.500" cy="1041" r="9.800" fill="#000"/>
<circle cx="1957.500" cy="1036.800" r="6.800" fill="url(#mw)"/>
</svg></div>
</div></body></html>
